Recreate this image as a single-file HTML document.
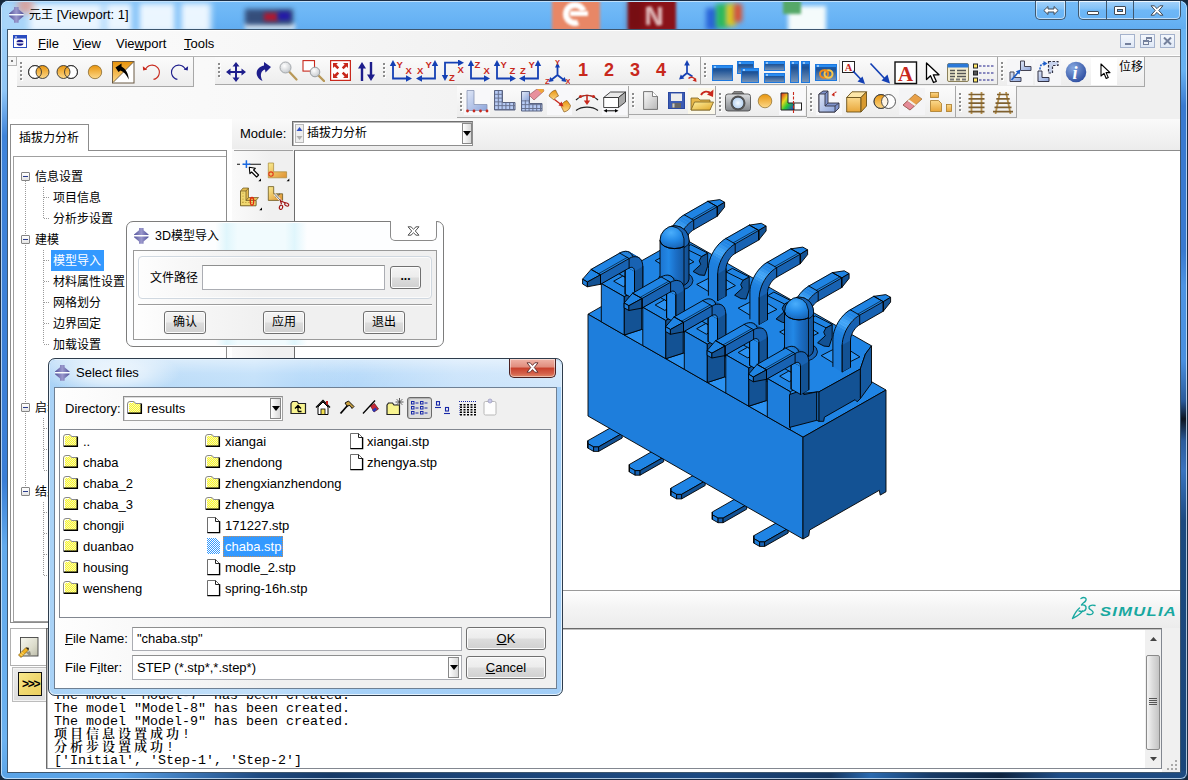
<!DOCTYPE html>
<html lang="zh"><head><meta charset="utf-8"><title>元王 [Viewport: 1]</title>
<style>
html,body{margin:0;padding:0}
body{width:1188px;height:780px;position:relative;overflow:hidden;background:#16283c;font-family:"Liberation Sans","Noto Sans CJK SC",sans-serif;font-size:13px;color:#000;line-height:1}
div,span,svg{position:absolute;box-sizing:border-box}
.t{white-space:nowrap}
u{text-decoration:underline;text-underline-offset:1px}
.cj{font-size:12px}
.tb{background:linear-gradient(#fbfbfb,#ededed);border-bottom:1px solid #a8a8a8;border-right:1px solid #a8a8a8}
.grip{width:3px;border-left:2px dotted #9a9a9a}
.btn{border:1px solid #707070;border-radius:3px;background:linear-gradient(#f4f4f4 0%,#ececec 48%,#dddddd 52%,#d0d0d0 100%);box-shadow:inset 0 0 0 1px #fcfcfc;text-align:center}
.inp{background:#fff;border:1px solid #abadb3;border-top-color:#8e8f8f}
.fold{width:15px;height:13px}
</style></head><body>
<!-- window frame -->
<div id="frame" style="left:0;top:0;width:1188px;height:780px;border-radius:8px 8px 7px 7px;background:#6cb6f6;border:1px solid #1c2e44;overflow:hidden">
<div style="left:0;top:0;width:8px;height:780px;background:linear-gradient(#a6d4fa 0,#90c6f6 90px,#3f84da 135px,#3a7ed6 480px,#62aaec 545px,#6cb2f0 740px,#5aa4e8 780px)"></div>
<div style="left:1178px;top:0;width:9px;height:780px;background:linear-gradient(#6ab4f4 0,#68b2f2 70px,#3a7ad0 105px,#3a7ad0 250px,#4c94e4 285px,#4a90e0 360px,#2a5a9a 400px,#0c1420 418px,#2c5c9c 440px,#3a74c0 470px,#1c4a80 520px,#1b467a 780px)"></div>
<div style="left:0;top:770px;width:1188px;height:9px;background:linear-gradient(90deg,#5aa4e8 0,#5aa2e6 120px,#3a74b4 190px,#1f4a80 260px,#163a68 330px,#1b4274 420px,#1d4a82 700px,#153660 830px,#2a6ab0 870px,#173a66 930px,#0e2440 1000px,#1f4e88 1060px,#1d4a80 1188px)"></div>
<div style="left:0;top:0;width:1186px;height:778px;border-radius:7px 7px 6px 6px;box-shadow:inset 0 0 0 1px rgba(220,238,252,.75)"></div>
</div>
<!-- title bar -->
<div style="left:2px;top:2px;width:1184px;height:27px;border-radius:6px 6px 0 0;background:linear-gradient(#74bbf7,#69b4f5 60%,#62adf0);overflow:hidden">
  <div style="left:-4px;top:-2px;width:34px;height:34px;background:#a9d5f9;filter:blur(3px)"></div>
  <div style="left:27px;top:1px;width:182px;height:30px;background:#f6fbff;filter:blur(3px);opacity:.93"></div>
  <div style="left:16px;top:-4px;width:15px;height:15px;background:#de9a90;filter:blur(3.500px);opacity:.85"></div>
  <div style="left:98px;top:-2px;width:8px;height:32px;background:#9fd0fa;filter:blur(2.500px);opacity:.55"></div>
  <div style="left:129px;top:-2px;width:9px;height:32px;background:#7fc0f8;filter:blur(2.500px);opacity:.85"></div>
  <div style="left:172px;top:-2px;width:8px;height:32px;background:#7fc0f8;filter:blur(2.500px);opacity:.85"></div>
  <div style="left:243px;top:21px;width:50px;height:7px;background:#eef6fd;filter:blur(2px);opacity:.9"></div>
  <div style="left:243px;top:7px;width:48px;height:16px;background:#2c3d66;filter:blur(2.500px);opacity:.85"></div>
  <div style="left:262px;top:11px;width:14px;height:8px;background:#b01830;filter:blur(2px)"></div>
  <div style="left:276px;top:10px;width:12px;height:8px;background:#2418a8;filter:blur(2px)"></div>
  <div style="left:550px;top:-3px;width:48px;height:32px;background:#e88766;filter:blur(1.5px)"></div>
  <div style="left:561px;top:0px;width:24px;height:24px;border:6px solid #fff;border-radius:50%;filter:blur(1.3px);border-right-color:transparent;transform:rotate(25deg)"></div>
  <div style="left:568px;top:9px;width:18px;height:5px;background:#fff;filter:blur(1px)"></div>
  <div style="left:626px;top:-3px;width:48px;height:32px;background:#8a1218;filter:blur(1.5px)"></div>
  <div style="left:644px;top:5px;width:4px;height:18px;background:#ecd0d0;filter:blur(1.5px);opacity:.9"></div><div style="left:656px;top:5px;width:4px;height:18px;background:#ecd0d0;filter:blur(1.5px);opacity:.9"></div><div style="left:650px;top:4px;width:4px;height:20px;background:#ecd0d0;filter:blur(1.5px);opacity:.9;transform:rotate(-28deg)"></div><div style="left:626px;top:-3px;width:14px;height:32px;background:#6a0c10;filter:blur(3px);opacity:.6"></div>
  <div style="left:704px;top:6px;width:12px;height:22px;background:#2a64d8;filter:blur(2.5px)"></div>
  <div style="left:714px;top:2px;width:12px;height:24px;background:#28b860;filter:blur(2.5px)"></div>
  <div style="left:724px;top:2px;width:10px;height:22px;background:#d8c820;filter:blur(2.5px)"></div>
  <div style="left:732px;top:2px;width:8px;height:18px;background:#d85030;filter:blur(2.5px)"></div>
  <div style="left:786px;top:4px;width:38px;height:26px;background:#f4fbfb;filter:blur(2px)"></div>
  <div style="left:781px;top:-3px;width:18px;height:15px;background:#55a868;filter:blur(1.5px)"></div>
</div>
<div style="left:8px;top:29px;width:1172px;height:1px;background:#33506c"></div>
<svg style="left:8.5px;top:7px" width="15" height="16" viewBox="0 0 15 16"><defs><linearGradient id="tg" x1="0" x2="1"><stop offset="0" stop-color="#54549c"/><stop offset=".5" stop-color="#9a98cc"/><stop offset="1" stop-color="#54549c"/></linearGradient></defs><path d="M5 0h4.600v2.200l5 4.300v.6H0v-.6l5-4.300z" fill="url(#tg)"/><rect x="0" y="7.100" width="14.600" height="1.500" fill="#fff"/><path d="M5 15.700h4.600v-2.200l5-4.300v-.6H0v.6l5 4.300z" fill="url(#tg)"/></svg>
<span class="t" style="left:29px;top:8px;font-size:13px"><span style="position:static;font-size:12px">元王</span> [Viewport: 1]</span>
<!-- caption buttons -->
<div style="left:1035px;top:1px;width:31px;height:19px;border:1px solid #40586e;border-top:none;border-radius:0 0 5px 5px;box-shadow:inset 0 0 0 1px rgba(255,255,255,.55);background:linear-gradient(rgba(255,255,255,.35),rgba(255,255,255,.12) 45%,rgba(255,255,255,0) 50%)"></div>
<svg style="left:1043px;top:5px" width="16" height="11" viewBox="0 0 16 11"><path d="M0.800 5.500 5 1.500v2.500h6V1.500l4.200 4-4.200 4V7H5v2.500z" fill="#fff" stroke="#404a56" stroke-width="1"/></svg>
<div style="left:1078px;top:1px;width:103px;height:19px;border:1px solid #40586e;border-top:none;border-radius:0 0 5px 5px;box-shadow:inset 0 0 0 1px rgba(255,255,255,.55);background:linear-gradient(rgba(255,255,255,.35),rgba(255,255,255,.12) 45%,rgba(255,255,255,0) 50%)"></div>
<div style="left:1106px;top:1px;width:1px;height:18px;background:#40586e"></div>
<div style="left:1133px;top:1px;width:1px;height:18px;background:#40586e"></div>
<div style="left:1087px;top:11px;width:12px;height:4px;background:#fff;border:1px solid #404a56;border-radius:1px"></div>
<div style="left:1114px;top:6px;width:12px;height:9px;background:#fff;border:1px solid #404a56;border-radius:1px"></div>
<div style="left:1117px;top:9px;width:6px;height:3px;background:#68aef0;border:1px solid #404a56"></div>
<svg style="left:1150px;top:5px" width="14" height="11" viewBox="0 0 14 11"><path d="M1 .8h3.200L7 3.600 9.800.8H13L8.800 5.500 13 10.200H9.800L7 7.400 4.200 10.200H1l4.200-4.700z" fill="#fff" stroke="#404a56" stroke-width="1"/></svg>

<!-- client -->
<div id="client" style="left:8px;top:30px;width:1172px;height:742px;background:#fff;outline:1px solid #3d566e"></div>
<!-- menu bar -->
<div style="left:8px;top:30px;width:1172px;height:26px;background:linear-gradient(90deg,#fcfcfc 0,#f7f7f7 22%,#f0f0f0 45%);border-top:1px solid #fff;border-bottom:1px solid #fff"></div>
<svg style="left:13px;top:35px" width="14" height="13" viewBox="0 0 14 13"><rect x=".5" y=".5" width="13" height="12" fill="#fff" stroke="#2a4cc0"/><rect x="1" y="1" width="12" height="2.500" fill="#2a4cc0"/><rect x="2" y="1.500" width="2" height="1" fill="#fff"/><ellipse cx="7" cy="7.800" rx="3.600" ry="3" fill="#1c1c8c"/><rect x="3" y="7.200" width="8" height="1.300" fill="#fff"/></svg>
<span class="t" style="left:38px;top:37px"><u>F</u>ile</span>
<span class="t" style="left:73px;top:37px"><u>V</u>iew</span>
<span class="t" style="left:116px;top:37px">Vie<u>w</u>port</span>
<span class="t" style="left:184px;top:37px"><u>T</u>ools</span>
<!-- MDI buttons -->
<div style="left:1120px;top:34px;width:15px;height:14px;border:1px solid #a4b2cc;background:linear-gradient(#f4f7fc,#dfe8f6)"></div>
<div style="left:1125px;top:43px;width:6px;height:2px;background:#74809c"></div>
<div style="left:1140px;top:34px;width:15px;height:14px;border:1px solid #a4b2cc;background:linear-gradient(#f4f7fc,#dfe8f6)"></div>
<div style="left:1146px;top:37px;width:6px;height:5px;border:1px solid #74809c;border-top-width:2px"></div>
<div style="left:1143px;top:40px;width:6px;height:5px;border:1px solid #74809c;border-top-width:2px;background:#eef1f6"></div>
<div style="left:1160px;top:34px;width:15px;height:14px;border:1px solid #a4b2cc;background:linear-gradient(#f4f7fc,#dfe8f6)"></div>
<svg style="left:1163px;top:37px" width="9" height="8" viewBox="0 0 9 8"><path d="M1 .5 8 7.500M8 .5 1 7.500" stroke="#74809c" stroke-width="2"/></svg>

<svg width="0" height="0" style="left:0;top:0"><defs>
<linearGradient id="og" x1="0" y1="0" x2="0" y2="1"><stop offset="0" stop-color="#e8940c"/><stop offset="1" stop-color="#fdd98a"/></linearGradient>
<linearGradient id="og2" x1="0" y1="0" x2="0" y2="1"><stop offset="0" stop-color="#fbd98c"/><stop offset="1" stop-color="#e8a63a"/></linearGradient>
<linearGradient id="bw" x1="0" y1="0" x2="0" y2="1"><stop offset="0" stop-color="#1c66c0"/><stop offset=".3" stop-color="#1d5296"/><stop offset="1" stop-color="#7a96b8"/></linearGradient>
<linearGradient id="lb" x1="0" y1="0" x2="1" y2="1"><stop offset="0" stop-color="#dfe6f6"/><stop offset="1" stop-color="#8ea6dc"/></linearGradient>
<linearGradient id="gy" x1="0" y1="0" x2="1" y2="1"><stop offset="0" stop-color="#fbfbfb"/><stop offset="1" stop-color="#b8b8b8"/></linearGradient>
<radialGradient id="lens" cx=".4" cy=".35" r=".7"><stop offset="0" stop-color="#ffffff"/><stop offset="1" stop-color="#c4c8cc"/></radialGradient>
<linearGradient id="ye" x1="0" y1="0" x2="1" y2="1"><stop offset="0" stop-color="#fff0a0"/><stop offset="1" stop-color="#e0a828"/></linearGradient>
</defs></svg>
<div style="left:8px;top:56px;width:1172px;height:1px;background:#b4b4b4"></div>
<div style="left:8px;top:57px;width:1172px;height:62px;background:linear-gradient(90deg,#fcfcfc 0,#f8f8f8 22%,#f0f0f0 48%)"></div>
<div style="left:8px;top:57px;width:9px;height:9px;border-right:1px solid #b4b4b4;border-bottom:1px solid #b4b4b4;background:#f6f6f6"></div><div style="left:11px;top:60px;width:2px;height:2px;background:#7c7c7c"></div>
<div class="tb" style="left:17px;top:57px;width:177px;height:30px;"></div>
<div style="left:21px;top:63px;width:2px;height:2px;background:#fff"></div><div style="left:20px;top:62px;width:2px;height:2px;background:#8c8c8c"></div>
<div style="left:21px;top:67px;width:2px;height:2px;background:#fff"></div><div style="left:20px;top:66px;width:2px;height:2px;background:#8c8c8c"></div>
<div style="left:21px;top:71px;width:2px;height:2px;background:#fff"></div><div style="left:20px;top:70px;width:2px;height:2px;background:#8c8c8c"></div>
<div style="left:21px;top:75px;width:2px;height:2px;background:#fff"></div><div style="left:20px;top:74px;width:2px;height:2px;background:#8c8c8c"></div>
<div style="left:21px;top:79px;width:2px;height:2px;background:#fff"></div><div style="left:20px;top:78px;width:2px;height:2px;background:#8c8c8c"></div>
<svg style="left:27px;top:64px" width="24" height="16" viewBox="0 0 24 16"><circle cx="8" cy="8" r="6.500" fill="#fff" stroke="#333" stroke-width=".9"/><circle cx="15.500" cy="8" r="6.500" fill="url(#og)" stroke="#333" stroke-width=".9"/><circle cx="8" cy="8" r="6.500" fill="none" stroke="#333" stroke-width=".9"/></svg>
<svg style="left:55px;top:64px" width="24" height="16" viewBox="0 0 24 16"><circle cx="16" cy="8" r="6.500" fill="#fff" stroke="#333" stroke-width=".9"/><circle cx="8.500" cy="8" r="6.500" fill="url(#og)" stroke="#333" stroke-width=".9"/><circle cx="16" cy="8" r="6.500" fill="none" stroke="#333" stroke-width=".9"/></svg>
<svg style="left:87px;top:64px" width="16" height="16" viewBox="0 0 16 16"><circle cx="8" cy="8" r="6.700" fill="url(#og)" stroke="#7a5a20" stroke-width=".7"/></svg>
<svg style="left:112px;top:61px" width="23" height="23" viewBox="0 0 23 23"><rect x=".5" y=".5" width="21.500" height="21.500" fill="#fff" stroke="#6a5a44"/><path d="M1 1H21.500L1 21.500z" fill="url(#og)"/><path d="M1 21.500 21.500 1" stroke="#5a4a34" stroke-width=".8"/><path d="M3.500 6.500 9.500 2.500 9.500 5.500C13.500 7.500 16.500 12.500 16.800 18.500 14.500 13.500 11.500 10.500 8.500 9.500L6.500 11z" fill="#000"/></svg>
<svg style="left:142px;top:63px" width="19" height="19" viewBox="0 0 19 19"><path d="M3.400 6.800A7.200 7.200 0 1 1 11.500 16.400" fill="none" stroke="#c8281c" stroke-width="1.100"/><path d="M.8 3.300 5.200 6.600 1.200 7.500z" fill="#c8281c"/></svg>
<svg style="left:170px;top:63px" width="19" height="19" viewBox="0 0 19 19"><path d="M15.500 6.800A7.200 7.200 0 1 0 7.400 16.400" fill="none" stroke="#1e1e8c" stroke-width="1.100"/><path d="M18.100 3.300 13.700 6.600 17.700 7.500z" fill="#1e1e8c"/></svg>
<div class="tb" style="left:215px;top:57px;width:166px;height:28px;"></div>
<div style="left:219px;top:64px;width:2px;height:2px;background:#fff"></div><div style="left:218px;top:63px;width:2px;height:2px;background:#8c8c8c"></div>
<div style="left:219px;top:68px;width:2px;height:2px;background:#fff"></div><div style="left:218px;top:67px;width:2px;height:2px;background:#8c8c8c"></div>
<div style="left:219px;top:72px;width:2px;height:2px;background:#fff"></div><div style="left:218px;top:71px;width:2px;height:2px;background:#8c8c8c"></div>
<div style="left:219px;top:76px;width:2px;height:2px;background:#fff"></div><div style="left:218px;top:75px;width:2px;height:2px;background:#8c8c8c"></div>
<svg style="left:226px;top:62px" width="20" height="20" viewBox="0 0 20 20"><path d="M10 0 13.500 4.500H11V9H15.500V6.500L20 10 15.500 13.500V11H11V15.500H13.500L10 20 6.500 15.500H9V11H4.500V13.500L0 10 4.500 6.500V9H9V4.500H6.500z" fill="#1e1e8c"/></svg>
<svg style="left:254px;top:62px" width="17" height="20" viewBox="0 0 17 20"><path d="M10 0 17 5 11.500 10.500 11 7.500C7 8.500 5.500 13 8.500 19 1 15.500 0 6 10 3.500z" fill="#1e1e8c"/></svg>
<svg style="left:279px;top:61px" width="19" height="20" viewBox="0 0 19 20"><path d="M10 10.500 17.500 18.500" stroke="#b89858" stroke-width="2.200" stroke-linecap="round"/><circle cx="6.500" cy="6.500" r="5.500" fill="url(#lens)" stroke="#a4a8ac" stroke-width="1"/></svg>
<svg style="left:302px;top:60px" width="23" height="22" viewBox="0 0 23 22"><rect x="1" y=".6" width="11.500" height="10.500" fill="#fff" stroke="#c8281c" stroke-width="1.100"/><path d="M16 15 22 21" stroke="#b89858" stroke-width="2.400" stroke-linecap="round"/><circle cx="13" cy="12" r="4.800" fill="url(#lens)" stroke="#9a9ea2" stroke-width="1"/></svg>
<svg style="left:330px;top:60px" width="21" height="21" viewBox="0 0 21 21"><rect x=".6" y=".6" width="19.800" height="19.800" fill="#fff" stroke="#c8281c" stroke-width="1.200"/><g fill="#c8281c"><path d="M3 3H8L6.400 4.600 9.200 7.400 7.400 9.200 4.600 6.400 3 8z"/><path d="M18 3V8L16.400 6.400 13.600 9.200 11.800 7.400 14.600 4.600 13 3z"/><path d="M3 18V13L4.600 14.600 7.400 11.800 9.200 13.600 6.400 16.400 8 18z"/><path d="M18 18H13L14.600 16.400 11.800 13.600 13.600 11.800 16.400 14.600 18 13z"/></g></svg>
<svg style="left:358px;top:62px" width="17" height="19" viewBox="0 0 17 19"><path d="M4 0 8 6.500H5.200V19H2.800V6.500H0z" fill="#1e1e8c"/><path d="M13 19 9 12.500H11.800V0H14.200V12.500H17z" fill="#1e1e8c"/></svg>
<div class="tb" style="left:380px;top:57px;width:321px;height:28px;"></div>
<div style="left:384px;top:64px;width:2px;height:2px;background:#fff"></div><div style="left:383px;top:63px;width:2px;height:2px;background:#8c8c8c"></div>
<div style="left:384px;top:68px;width:2px;height:2px;background:#fff"></div><div style="left:383px;top:67px;width:2px;height:2px;background:#8c8c8c"></div>
<div style="left:384px;top:72px;width:2px;height:2px;background:#fff"></div><div style="left:383px;top:71px;width:2px;height:2px;background:#8c8c8c"></div>
<div style="left:384px;top:76px;width:2px;height:2px;background:#fff"></div><div style="left:383px;top:75px;width:2px;height:2px;background:#8c8c8c"></div>
<svg style="left:389px;top:60px" width="24" height="22" viewBox="0 0 24 22"><path d="M4 4V18.500H19" stroke="#1440b4" stroke-width="1.800" fill="none"/><path d="M4 0 7.200 6H.8z" fill="#1440b4"/><path d="M23 18.500 17 21.700V15.300z" fill="#1440b4"/><text x="7.500" y="7.500" font-family="Liberation Sans,sans-serif" font-weight="bold" font-size="9.500" fill="#c8281c">Y</text><text x="16.500" y="14" font-family="Liberation Sans,sans-serif" font-weight="bold" font-size="9.500" fill="#c8281c">X</text></svg>
<svg style="left:416px;top:60px" width="24" height="22" viewBox="0 0 24 22"><path d="M19 4V18.500H4" stroke="#1440b4" stroke-width="1.800" fill="none"/><path d="M19 0 22.200 6H15.800z" fill="#1440b4"/><path d="M0 18.500 6 21.700V15.300z" fill="#1440b4"/><text x="9.500" y="7.500" font-family="Liberation Sans,sans-serif" font-weight="bold" font-size="9.500" fill="#c8281c">Y</text><text x="1" y="14" font-family="Liberation Sans,sans-serif" font-weight="bold" font-size="9.500" fill="#c8281c">X</text></svg>
<svg style="left:441px;top:60px" width="24" height="22" viewBox="0 0 24 22"><path d="M19 2.700H4V17" stroke="#1440b4" stroke-width="1.800" fill="none"/><path d="M23 2.700 17 5.900V-.5z" fill="#1440b4"/><path d="M4 21 7.200 15H.8z" fill="#1440b4"/><text x="16.500" y="13" font-family="Liberation Sans,sans-serif" font-weight="bold" font-size="9.500" fill="#c8281c">X</text><text x="8" y="21" font-family="Liberation Sans,sans-serif" font-weight="bold" font-size="9.500" fill="#c8281c">Z</text></svg>
<svg style="left:467px;top:60px" width="24" height="22" viewBox="0 0 24 22"><path d="M4 4V18.500H19" stroke="#1440b4" stroke-width="1.800" fill="none"/><path d="M4 0 7.200 6H.8z" fill="#1440b4"/><path d="M23 18.500 17 21.700V15.300z" fill="#1440b4"/><text x="7.500" y="7.500" font-family="Liberation Sans,sans-serif" font-weight="bold" font-size="9.500" fill="#c8281c">Z</text><text x="16.500" y="14" font-family="Liberation Sans,sans-serif" font-weight="bold" font-size="9.500" fill="#c8281c">X</text></svg>
<svg style="left:493px;top:60px" width="24" height="22" viewBox="0 0 24 22"><path d="M4 4V18.500H19" stroke="#1440b4" stroke-width="1.800" fill="none"/><path d="M4 0 7.200 6H.8z" fill="#1440b4"/><path d="M23 18.500 17 21.700V15.300z" fill="#1440b4"/><text x="7.500" y="7.500" font-family="Liberation Sans,sans-serif" font-weight="bold" font-size="9.500" fill="#c8281c">Y</text><text x="16.500" y="14" font-family="Liberation Sans,sans-serif" font-weight="bold" font-size="9.500" fill="#c8281c">Z</text></svg>
<svg style="left:519px;top:60px" width="24" height="22" viewBox="0 0 24 22"><path d="M19 4V18.500H4" stroke="#1440b4" stroke-width="1.800" fill="none"/><path d="M19 0 22.200 6H15.800z" fill="#1440b4"/><path d="M0 18.500 6 21.700V15.300z" fill="#1440b4"/><text x="9.500" y="7.500" font-family="Liberation Sans,sans-serif" font-weight="bold" font-size="9.500" fill="#c8281c">Y</text><text x="1" y="14" font-family="Liberation Sans,sans-serif" font-weight="bold" font-size="9.500" fill="#c8281c">Z</text></svg>
<svg style="left:545px;top:58px" width="25" height="26" viewBox="0 0 25 26"><path d="M12.500 7V17M12.500 17 5.500 22.500M12.500 17 19.500 22.500" stroke="#1440b4" stroke-width="1.800" fill="none"/><path d="M12.500 4.500 15 9.500H10z" fill="#1440b4"/><path d="M3.500 24 5.300 19 8.800 23z" fill="#1440b4"/><path d="M21.500 24 19.700 19 16.200 23z" fill="#1440b4"/><text x="10" y="6.500" font-family="Liberation Sans,sans-serif" font-weight="bold" font-size="7.500" fill="#c8281c">Y</text><text x="0" y="25.500" font-family="Liberation Sans,sans-serif" font-weight="bold" font-size="7.500" fill="#c8281c">Z</text><text x="20.500" y="25.500" font-family="Liberation Sans,sans-serif" font-weight="bold" font-size="7.500" fill="#c8281c">X</text></svg>
<span class="t" style="left:575px;top:61px;width:16px;text-align:center;font-weight:bold;font-size:18px;color:#c8281c">1</span>
<span class="t" style="left:601px;top:61px;width:16px;text-align:center;font-weight:bold;font-size:18px;color:#c8281c">2</span>
<span class="t" style="left:627px;top:61px;width:16px;text-align:center;font-weight:bold;font-size:18px;color:#c8281c">3</span>
<span class="t" style="left:653px;top:61px;width:16px;text-align:center;font-weight:bold;font-size:18px;color:#c8281c">4</span>
<svg style="left:679px;top:60px" width="18" height="22" viewBox="0 0 18 22"><path d="M8 5V13M8 13 2.500 17.500M8 13 13.500 16.500" stroke="#1440b4" stroke-width="1.700" fill="none"/><path d="M8 0 10.800 5.500H5.200z" fill="#1440b4"/><path d="M0 19.500 1.800 14.500 5.300 18.500z" fill="#1440b4"/><path d="M9.500 18.500C12 16.500 15 17 16.500 20" stroke="#c8281c" stroke-width="1.500" fill="none"/><path d="M17.500 22 13.500 20.500 17 18z" fill="#c8281c"/></svg>
<div class="tb" style="left:701px;top:57px;width:297px;height:28px;"></div>
<div style="left:705px;top:64px;width:2px;height:2px;background:#fff"></div><div style="left:704px;top:63px;width:2px;height:2px;background:#8c8c8c"></div>
<div style="left:705px;top:68px;width:2px;height:2px;background:#fff"></div><div style="left:704px;top:67px;width:2px;height:2px;background:#8c8c8c"></div>
<div style="left:705px;top:72px;width:2px;height:2px;background:#fff"></div><div style="left:704px;top:71px;width:2px;height:2px;background:#8c8c8c"></div>
<div style="left:705px;top:76px;width:2px;height:2px;background:#fff"></div><div style="left:704px;top:75px;width:2px;height:2px;background:#8c8c8c"></div>
<svg style="left:712px;top:61px" width="100" height="24" viewBox="0 0 100 24"><rect x="0.5" y="4.5" width="20" height="15" fill="url(#bw)" stroke="#1c78e0" stroke-width="1"/><rect x="1" y="5" width="19" height="2" fill="#2a8cf0"/><rect x="2" y="5.5" width="2" height="1" fill="#fff"/><rect x="25.5" y="0.5" width="16" height="12" fill="url(#bw)" stroke="#1c78e0" stroke-width="1"/><rect x="26" y="1" width="15" height="2" fill="#2a8cf0"/><rect x="27" y="1.5" width="2" height="1" fill="#fff"/><rect x="29.5" y="7.5" width="17" height="14" fill="url(#bw)" stroke="#1c78e0" stroke-width="1"/><rect x="30" y="8" width="16" height="2" fill="#2a8cf0"/><rect x="31" y="8.5" width="2" height="1" fill="#fff"/><rect x="52.5" y="0.5" width="20" height="9" fill="url(#bw)" stroke="#1c78e0" stroke-width="1"/><rect x="53" y="1" width="19" height="2" fill="#2a8cf0"/><rect x="54" y="1.5" width="2" height="1" fill="#fff"/><rect x="52.5" y="12.5" width="20" height="9" fill="url(#bw)" stroke="#1c78e0" stroke-width="1"/><rect x="53" y="13" width="19" height="2" fill="#2a8cf0"/><rect x="54" y="13.5" width="2" height="1" fill="#fff"/><rect x="78.5" y="0.5" width="8" height="21" fill="url(#bw)" stroke="#1c78e0" stroke-width="1"/><rect x="79" y="1" width="7" height="2" fill="#2a8cf0"/><rect x="80" y="1.5" width="2" height="1" fill="#fff"/><rect x="89.5" y="0.5" width="8" height="21" fill="url(#bw)" stroke="#1c78e0" stroke-width="1"/><rect x="90" y="1" width="7" height="2" fill="#2a8cf0"/><rect x="91" y="1.5" width="2" height="1" fill="#fff"/></svg>
<svg style="left:815px;top:64px" width="23" height="18" viewBox="0 0 23 18"><rect x="0.5" y="0.5" width="21" height="16" fill="url(#bw)" stroke="#1c78e0" stroke-width="1"/><rect x="1" y="1" width="20" height="2" fill="#2a8cf0"/><rect x="2" y="1.5" width="2" height="1" fill="#fff"/><ellipse cx="9" cy="10" rx="4" ry="3.800" fill="none" stroke="#f08a18" stroke-width="2"/><ellipse cx="13.500" cy="10" rx="4" ry="3.800" fill="none" stroke="#f8c84a" stroke-width="2"/><path d="M9 6.200A4 3.800 0 0 1 13 10" fill="none" stroke="#f08a18" stroke-width="2"/></svg>
<div style="left:839px;top:60px;width:1px;height:22px;background:#c4c4c4"></div>
<svg style="left:842px;top:61px" width="24" height="24" viewBox="0 0 24 24"><rect x=".5" y=".5" width="12" height="11" fill="#fff" stroke="#222"/><text x="2.800" y="10" font-family="Liberation Serif,serif" font-weight="bold" font-size="10.500" fill="#c8281c">A</text><path d="M11 10 20 19.500" stroke="#1440b4" stroke-width="1.700"/><path d="M23 23 15.500 20.500 20.500 15.500z" fill="#1440b4"/></svg>
<svg style="left:869px;top:62px" width="22" height="22" viewBox="0 0 22 22"><path d="M1.500 1.500 16 17" stroke="#1440b4" stroke-width="1.700"/><path d="M21 21.500 12.500 18.500 18.500 12.500z" fill="#1440b4"/></svg>
<svg style="left:894px;top:61px" width="24" height="24" viewBox="0 0 24 24"><rect x="1" y="1" width="21.500" height="21.500" fill="#fff" stroke="#111" stroke-width="1.400"/><text x="4" y="19.500" font-family="Liberation Serif,serif" font-weight="bold" font-size="21" fill="#c8281c">A</text></svg>
<svg style="left:925px;top:62px" width="16" height="22" viewBox="0 0 16 22"><path d="M1.500 1V17.500L5.500 13.800 8.500 20.500 11.300 19.300 8.300 12.800H14z" fill="#fff" stroke="#000" stroke-width="1.300" stroke-linejoin="round"/></svg>
<svg style="left:947px;top:63px" width="23" height="20" viewBox="0 0 23 20"><rect x=".5" y=".5" width="21" height="18" rx="1.500" fill="#f2ecd0" stroke="#8a805a"/><path d="M.5 4.500V2A1.500 1.500 0 0 1 2 .5H20A1.500 1.500 0 0 1 21.500 2V4.500z" fill="#2a78d8"/><g stroke="#555" stroke-width="1.300"><path d="M3 7.500H8M10 7.500H19M3 10.500H8M10 10.500H19M3 13.500H8M10 13.500H19"/></g><rect x="3" y="15.500" width="4" height="2" fill="#777"/><rect x="9" y="15.500" width="4" height="2" fill="#777"/><rect x="15" y="15.500" width="4" height="2" fill="#777"/></svg>
<svg style="left:973px;top:63px" width="22" height="20" viewBox="0 0 22 20"><g stroke="#1e1e8c" stroke-width="1.200" stroke-dasharray="2.500 1.500"><path d="M6 3H22M6 10H22M6 17H22"/></g><rect x=".5" y="1" width="4" height="4" fill="#ffe86a" stroke="#222"/><rect x=".5" y="8" width="4" height="4" fill="#555" stroke="#222"/><rect x=".5" y="15" width="4" height="4" fill="#ffe86a" stroke="#222"/></svg>
<div class="tb" style="left:998px;top:57px;width:147px;height:30px;"></div>
<div style="left:1002px;top:63px;width:2px;height:2px;background:#fff"></div><div style="left:1001px;top:62px;width:2px;height:2px;background:#8c8c8c"></div>
<div style="left:1002px;top:67px;width:2px;height:2px;background:#fff"></div><div style="left:1001px;top:66px;width:2px;height:2px;background:#8c8c8c"></div>
<div style="left:1002px;top:71px;width:2px;height:2px;background:#fff"></div><div style="left:1001px;top:70px;width:2px;height:2px;background:#8c8c8c"></div>
<div style="left:1002px;top:75px;width:2px;height:2px;background:#fff"></div><div style="left:1001px;top:74px;width:2px;height:2px;background:#8c8c8c"></div>
<div style="left:1002px;top:79px;width:2px;height:2px;background:#fff"></div><div style="left:1001px;top:78px;width:2px;height:2px;background:#8c8c8c"></div>
<div style="left:1007px;top:59px;width:26px;height:26px;background:#f6f6f8"></div>
<svg style="left:1009px;top:60px" width="23" height="23" viewBox="0 0 23 23"><path d="M11.500 1H15.500V6.500H22V10.500H11.500z" fill="url(#lb)" stroke="#445" stroke-width="1"/><path d="M1 12H5V17.500H12V21.500H1z" fill="url(#lb)" stroke="#445" stroke-width="1"/><path d="M2.500 20 9.500 12" stroke="#1c5cc8" stroke-width="1.600"/><path d="M11.500 9.500 10.500 14.500 6.800 11.300z" fill="#1c5cc8"/></svg>
<div style="left:1035px;top:59px;width:26px;height:26px;background:#f6f6f8"></div>
<svg style="left:1037px;top:60px" width="23" height="23" viewBox="0 0 23 23"><path d="M11.500 1.500H21V5.500H15.500V13H11.500z" fill="#c9d4ee" stroke="#334" stroke-width="1.200" stroke-dasharray="2.500 1.500"/><path d="M1 11H5V17.500H12V21.500H1z" fill="url(#lb)" stroke="#334" stroke-width="1"/><path d="M3 9.500C3 5 5 3.500 8 3.500" stroke="#1c5cc8" stroke-width="1.500" fill="none" stroke-dasharray="2 1.200"/><path d="M10.500 3.500 6.500 1V6z" fill="#1c5cc8"/></svg>
<svg style="left:1065px;top:61px" width="22" height="22" viewBox="0 0 22 22"><defs><radialGradient id="inf" cx=".35" cy=".3" r=".8"><stop offset="0" stop-color="#86a8e0"/><stop offset="1" stop-color="#28489c"/></radialGradient></defs><circle cx="11" cy="11" r="10.300" fill="url(#inf)"/><text x="7.500" y="17.500" font-family="Liberation Serif,serif" font-style="italic" font-weight="bold" font-size="18" fill="#fff">i</text></svg>
<div style="left:1091px;top:58px;width:26px;height:27px;background:#fff"></div>
<svg style="left:1100px;top:63px" width="12" height="17" viewBox="0 0 12 17"><path d="M1 1V13L4 10.300 6.200 15.500 8.300 14.600 6.100 9.600H10z" fill="#fff" stroke="#000" stroke-width="1.100" stroke-linejoin="round"/></svg>
<span class="t" style="left:1119px;top:61px;font-size:12px">位移</span>
<div class="tb" style="left:457px;top:86px;width:172px;height:32px;border-top:none"></div>
<div style="left:461px;top:94px;width:2px;height:2px;background:#fff"></div><div style="left:460px;top:93px;width:2px;height:2px;background:#8c8c8c"></div>
<div style="left:461px;top:98px;width:2px;height:2px;background:#fff"></div><div style="left:460px;top:97px;width:2px;height:2px;background:#8c8c8c"></div>
<div style="left:461px;top:102px;width:2px;height:2px;background:#fff"></div><div style="left:460px;top:101px;width:2px;height:2px;background:#8c8c8c"></div>
<div style="left:461px;top:106px;width:2px;height:2px;background:#fff"></div><div style="left:460px;top:105px;width:2px;height:2px;background:#8c8c8c"></div>
<div style="left:461px;top:110px;width:2px;height:2px;background:#fff"></div><div style="left:460px;top:109px;width:2px;height:2px;background:#8c8c8c"></div>
<div style="left:464px;top:88px;width:26px;height:27px;background:#f8f8fa"></div>
<svg style="left:465px;top:90px" width="25" height="24" viewBox="0 0 25 24"><path d="M2 .5H9V14.500H22V20.500H2z" fill="url(#lb)" stroke="#8894b4" stroke-width=".8"/><g fill="#c8281c"><circle cx="2.500" cy="21" r="1.400"/><circle cx="9" cy="21" r="1.400"/><circle cx="15.500" cy="21" r="1.400"/><circle cx="22" cy="21" r="1.400"/></g></svg>
<svg style="left:494px;top:90px" width="22" height="21" viewBox="0 0 22 21"><defs><pattern id="gp" width="3.800" height="3.800" patternUnits="userSpaceOnUse"><rect width="3.800" height="3.800" fill="#b8ccf6"/><path d="M0 .5H3.800M.5 0V3.800" stroke="#66708e" stroke-width="1.100"/></pattern></defs><path d="M.5 .5H8.500V12.500H21V20H.5z" fill="url(#gp)" stroke="#5a6482"/></svg>
<svg style="left:521px;top:89px" width="24" height="23" viewBox="0 0 24 23"><path d="M.5 2.500H8.500V14.500H21V22H.5z" fill="url(#gp)" stroke="#5a6482"/><path d="M1 3H8V11H1z" fill="url(#lb)"/><path d="M8 6 16 0H22L23 2 13 11z" fill="#e8909c" stroke="#8a4a50" stroke-width=".6"/><path d="M16 0H22L23 2 20.500 4.200z" fill="#f0a838"/></svg>
<div style="left:547px;top:88px;width:25px;height:27px;background:#f8f8fa"></div>
<svg style="left:548px;top:89px" width="24" height="24" viewBox="0 0 24 24"><path d="M1 7C2 4 4 2 7.500 1L10.500 7C8 8 7 9 6 11z" fill="url(#og)" stroke="#8a5a18" stroke-width=".7"/><path d="M13 17C14.500 14 16 12.500 19 11.500L22.500 16.500C22 20 20 22 16 23z" fill="url(#og)" stroke="#8a5a18" stroke-width=".7"/><path d="M6.500 10.500 13 15.500" stroke="#c8281c" stroke-width="1.400"/><path d="M15.500 17.500 10.500 16.500 13.500 12.500z" fill="#c8281c"/></svg>
<svg style="left:575px;top:92px" width="24" height="20" viewBox="0 0 24 20"><path d="M1 8C7 2 17 2 23 8" fill="none" stroke="#222" stroke-width="1.200"/><path d="M1 18.500C7 14 17 14 23 18.500" fill="none" stroke="#222" stroke-width="1.200"/><path d="M5 4.500 12 3 19 4.500" stroke="#c8281c" stroke-width="1" fill="none"/><circle cx="5.500" cy="4.500" r="1.600" fill="#c8281c"/><circle cx="18.500" cy="4.500" r="1.600" fill="#c8281c"/><path d="M12 3.500V9" stroke="#c8281c" stroke-width="1.600"/><path d="M12 13 8.800 8.500H15.200z" fill="#c8281c"/></svg>
<div style="left:602px;top:88px;width:25px;height:27px;background:#f8f8fa"></div>
<svg style="left:603px;top:91px" width="24" height="22" viewBox="0 0 24 22"><path d="M.7 6.500H15.500V16.500H.7z" fill="#fff" stroke="#333" stroke-width=".9"/><path d="M.7 6.500 7.500 1H22.500L15.500 6.500z" fill="#e8e8e8" stroke="#333" stroke-width=".9"/><path d="M15.500 6.500 22.500 1V11L15.500 16.500z" fill="#aaa" stroke="#333" stroke-width=".9"/><path d="M3 19.800H13" stroke="#000" stroke-width="1"/><path d="M.5 19.800 4 18V21.600zM15.500 19.800 12 18V21.600z" fill="#000"/></svg>
<div class="tb" style="left:629px;top:86px;width:87px;height:29px;border-top:none"></div>
<div style="left:633px;top:94px;width:2px;height:2px;background:#fff"></div><div style="left:632px;top:93px;width:2px;height:2px;background:#8c8c8c"></div>
<div style="left:633px;top:98px;width:2px;height:2px;background:#fff"></div><div style="left:632px;top:97px;width:2px;height:2px;background:#8c8c8c"></div>
<div style="left:633px;top:102px;width:2px;height:2px;background:#fff"></div><div style="left:632px;top:101px;width:2px;height:2px;background:#8c8c8c"></div>
<div style="left:633px;top:106px;width:2px;height:2px;background:#fff"></div><div style="left:632px;top:105px;width:2px;height:2px;background:#8c8c8c"></div>
<svg style="left:643px;top:91px" width="16" height="19" viewBox="0 0 16 19"><path d="M.6 .6H9.500L14.500 5.500V18.400H.6z" fill="url(#gy)" stroke="#666" stroke-width=".9"/><path d="M9.500 .6V5.500H14.500" fill="#fff" stroke="#666" stroke-width=".8"/></svg>
<svg style="left:668px;top:92px" width="17" height="17" viewBox="0 0 17 17"><rect x=".5" y=".5" width="16" height="16" fill="#3c5cb4" stroke="#2a48a0"/><rect x="3" y="1.500" width="11" height="7.500" fill="#ececec"/><rect x="4" y="11" width="9" height="5" fill="#666"/><rect x="4.500" y="11.500" width="2" height="4" fill="#ccc"/></svg>
<div style="left:688px;top:88px;width:27px;height:26px;background:#fbf8ea"></div>
<svg style="left:690px;top:88px" width="25" height="24" viewBox="0 0 25 24"><path d="M1 10H8L10 12H20V22H1z" fill="#e8b84a" stroke="#7a6020" stroke-width=".8"/><path d="M1 22 4.500 14H23.500L20 22z" fill="url(#ye)" stroke="#7a6020" stroke-width=".8"/><path d="M11 7C13 3 18 2.500 21 5.500" fill="none" stroke="#c8281c" stroke-width="1.800"/><path d="M23.500 1.500 23 9 17 6.500z" fill="#c8281c"/></svg>
<div class="tb" style="left:716px;top:86px;width:91px;height:31px;border-top:none"></div>
<div style="left:720px;top:94px;width:2px;height:2px;background:#fff"></div><div style="left:719px;top:93px;width:2px;height:2px;background:#8c8c8c"></div>
<div style="left:720px;top:98px;width:2px;height:2px;background:#fff"></div><div style="left:719px;top:97px;width:2px;height:2px;background:#8c8c8c"></div>
<div style="left:720px;top:102px;width:2px;height:2px;background:#fff"></div><div style="left:719px;top:101px;width:2px;height:2px;background:#8c8c8c"></div>
<div style="left:720px;top:106px;width:2px;height:2px;background:#fff"></div><div style="left:719px;top:105px;width:2px;height:2px;background:#8c8c8c"></div>
<div style="left:720px;top:110px;width:2px;height:2px;background:#fff"></div><div style="left:719px;top:109px;width:2px;height:2px;background:#8c8c8c"></div>
<svg style="left:725px;top:91px" width="26" height="22" viewBox="0 0 26 22"><defs><linearGradient id="cam" x1="0" y1="0" x2="0" y2="1"><stop offset="0" stop-color="#dcdee0"/><stop offset="1" stop-color="#83878c"/></linearGradient><radialGradient id="cl" cx=".5" cy=".5" r=".6"><stop offset="0" stop-color="#f4faff"/><stop offset="1" stop-color="#a8c8ec"/></radialGradient></defs><path d="M7 3 9 .5H17L19 3z" fill="#888" stroke="#444" stroke-width=".6"/><rect x=".5" y="3" width="25" height="17" rx="2.500" fill="url(#cam)" stroke="#444" stroke-width=".8"/><circle cx="13" cy="12" r="7.500" fill="#555"/><circle cx="13" cy="12" r="5.800" fill="url(#cl)" stroke="#333" stroke-width=".6"/></svg>
<svg style="left:757px;top:93px" width="16" height="16" viewBox="0 0 16 16"><circle cx="8" cy="8" r="6.800" fill="url(#og)" stroke="#8a6a28" stroke-width=".7"/></svg>
<div style="left:779px;top:88px;width:26px;height:27px;background:#f8f8fa"></div>
<svg style="left:780px;top:92px" width="23" height="22" viewBox="0 0 23 22"><defs><linearGradient id="rb" x1="0" y1="0" x2="1" y2="1"><stop offset="0" stop-color="#e02020"/><stop offset=".35" stop-color="#e8d820"/><stop offset=".6" stop-color="#28c838"/><stop offset="1" stop-color="#2038d8"/></linearGradient></defs><path d="M1 1H8V11H14V18H1z" fill="url(#rb)" stroke="#222" stroke-width="1"/><rect x="14" y="11" width="7.500" height="7" fill="#fff" stroke="#222" stroke-width="1"/><path d="M13.500 0V22" stroke="#c8281c" stroke-width="1.100" stroke-dasharray="3 1.500"/></svg>
<div class="tb" style="left:807px;top:86px;width:149px;height:32px;border-top:none"></div>
<div style="left:811px;top:94px;width:2px;height:2px;background:#fff"></div><div style="left:810px;top:93px;width:2px;height:2px;background:#8c8c8c"></div>
<div style="left:811px;top:98px;width:2px;height:2px;background:#fff"></div><div style="left:810px;top:97px;width:2px;height:2px;background:#8c8c8c"></div>
<div style="left:811px;top:102px;width:2px;height:2px;background:#fff"></div><div style="left:810px;top:101px;width:2px;height:2px;background:#8c8c8c"></div>
<div style="left:811px;top:106px;width:2px;height:2px;background:#fff"></div><div style="left:810px;top:105px;width:2px;height:2px;background:#8c8c8c"></div>
<div style="left:811px;top:110px;width:2px;height:2px;background:#fff"></div><div style="left:810px;top:109px;width:2px;height:2px;background:#8c8c8c"></div>
<div style="left:816px;top:88px;width:26px;height:27px;background:#f8f8fa"></div>
<svg style="left:818px;top:90px" width="23" height="24" viewBox="0 0 23 24"><path d="M1 4 5 1H10V13H21V18L17 22H1z" fill="#8094cc" stroke="#334" stroke-width=".9"/><path d="M1 4H7V16H17V22H1z" fill="url(#lb)" stroke="#334" stroke-width=".9"/><path d="M7 4 10 1M7 16 10 13M17 16 21 13" stroke="#334" stroke-width=".8"/><path d="M15 5C15.500 3 17 2 18.500 2" stroke="#c8281c" stroke-width="1.200" fill="none" stroke-dasharray="2 1"/><path d="M16.500 6.500 13.500 5 16.500 2.500z" fill="#c8281c"/></svg>
<svg style="left:846px;top:91px" width="22" height="22" viewBox="0 0 22 22"><path d="M.7 6.500H15V21H.7z" fill="url(#og2)" stroke="#6a5018" stroke-width=".9"/><path d="M.7 6.500 6 .8H20.500L15 6.500z" fill="#fde6a8" stroke="#6a5018" stroke-width=".9"/><path d="M15 6.500 20.500 .8V15L15 21z" fill="#d89a30" stroke="#6a5018" stroke-width=".9"/></svg>
<svg style="left:873px;top:93px" width="24" height="17" viewBox="0 0 24 17"><circle cx="8" cy="8.500" r="7" fill="url(#og)" stroke="#444" stroke-width=".9"/><circle cx="15.500" cy="8.500" r="7" fill="#fff" fill-opacity=".85" stroke="#444" stroke-width=".9"/><circle cx="8" cy="8.500" r="7" fill="none" stroke="#444" stroke-width=".9"/></svg>
<div style="left:899px;top:88px;width:26px;height:27px;background:#f4f4f6"></div>
<svg style="left:902px;top:93px" width="21" height="18" viewBox="0 0 21 18"><path d="M1 12 13 1 20 6 8 17z" fill="#e8a048" stroke="#8a5a20" stroke-width=".6"/><path d="M1 12 5.500 8 12.500 13 8 17z" fill="#e48a98" stroke="#8a4a50" stroke-width=".6"/><path d="M5.500 8 7 6.600 14 11.600 12.500 13z" fill="#f4f0ec"/></svg>
<svg style="left:930px;top:92px" width="23" height="21" viewBox="0 0 23 21"><rect x=".5" y=".5" width="8" height="5" fill="url(#og2)" stroke="#a87a28" stroke-width=".8"/><path d="M.5 8.500H8.500L11.500 11.500V19.500H.5z" fill="url(#og2)" stroke="#a87a28" stroke-width=".8"/><rect x="16.500" y="12.500" width="5" height="7" fill="url(#og2)" stroke="#a87a28" stroke-width=".8"/></svg>
<div class="tb" style="left:956px;top:86px;width:61px;height:32px;border-top:none"></div>
<div style="left:960px;top:94px;width:2px;height:2px;background:#fff"></div><div style="left:959px;top:93px;width:2px;height:2px;background:#8c8c8c"></div>
<div style="left:960px;top:98px;width:2px;height:2px;background:#fff"></div><div style="left:959px;top:97px;width:2px;height:2px;background:#8c8c8c"></div>
<div style="left:960px;top:102px;width:2px;height:2px;background:#fff"></div><div style="left:959px;top:101px;width:2px;height:2px;background:#8c8c8c"></div>
<div style="left:960px;top:106px;width:2px;height:2px;background:#fff"></div><div style="left:959px;top:105px;width:2px;height:2px;background:#8c8c8c"></div>
<div style="left:960px;top:110px;width:2px;height:2px;background:#fff"></div><div style="left:959px;top:109px;width:2px;height:2px;background:#8c8c8c"></div>
<svg style="left:968px;top:92px" width="17" height="22" viewBox="0 0 17 22"><g stroke="#b8924c" stroke-width="1.800"><path d="M3.500 0V22M13.500 0V22"/></g><g stroke="#7e6030" stroke-width="1.700"><path d="M.5 2.500H16.500M.5 6.800H16.500M.5 11.100H16.500M.5 15.400H16.500M.5 19.700H16.500"/></g></svg>
<svg style="left:992px;top:92px" width="22" height="22" viewBox="0 0 22 22"><g stroke="#b8924c" stroke-width="1.800"><path d="M8 0 3.500 22M14 0 18.500 22"/></g><g stroke="#7e6030" stroke-width="1.700"><path d="M5 2.500H17M4.300 6.800H17.700M3.500 11.100H18.500M2.500 15.400H19.500M1 19.700H21"/></g></svg>
<!-- left panel -->
<div style="left:10px;top:124px;width:79px;height:27px;border:1px solid #8c8c8c;border-bottom:none;background:#fff"></div>
<span class="t cj" style="left:19px;top:132px">插拔力分析</span>
<div style="left:10px;top:150px;width:217px;height:473px;border:1px solid #8c8c8c;border-top:none;background:#fff"></div>
<div style="left:88px;top:150px;width:139px;height:1px;background:#8c8c8c"></div>
<div style="left:13px;top:156px;width:213px;height:466px;border:1px solid #a0a0a0;border-right:none;background:#fff"></div>
<div id="tree" style="left:14px;top:157px;width:212px;height:464px;overflow:hidden;font-size:12px">
  <!-- dotted connectors -->
  <div style="left:11px;top:24px;width:1px;height:306px;background:repeating-linear-gradient(#9a9a9a 0 1px,transparent 1px 2px)"></div>
  <div style="left:29px;top:30px;width:1px;height:31px;background:repeating-linear-gradient(#9a9a9a 0 1px,transparent 1px 2px)"></div>
  <div style="left:29px;top:93px;width:1px;height:94px;background:repeating-linear-gradient(#9a9a9a 0 1px,transparent 1px 2px)"></div>
  <div style="left:29px;top:261px;width:1px;height:52px;background:repeating-linear-gradient(#9a9a9a 0 1px,transparent 1px 2px)"></div>
  <div style="left:29px;top:345px;width:1px;height:74px;background:repeating-linear-gradient(#9a9a9a 0 1px,transparent 1px 2px)"></div>
</div>
<div style="left:21px;top:172px;width:9px;height:9px;border:1px solid #848484;border-radius:1px;background:linear-gradient(#fff,#e4e4e4)"></div><div style="left:23px;top:176px;width:5px;height:1px;background:#2a3c8c"></div>
<span class="t cj" style="left:35px;top:171px">信息设置</span>
<div style="left:44px;top:197px;width:5px;height:1px;background:repeating-linear-gradient(90deg,#9a9a9a 0 1px,transparent 1px 2px)"></div>
<span class="t cj" style="left:53px;top:192px">项目信息</span>
<div style="left:44px;top:218px;width:5px;height:1px;background:repeating-linear-gradient(90deg,#9a9a9a 0 1px,transparent 1px 2px)"></div>
<span class="t cj" style="left:53px;top:213px">分析步设置</span>
<div style="left:21px;top:235px;width:9px;height:9px;border:1px solid #848484;border-radius:1px;background:linear-gradient(#fff,#e4e4e4)"></div><div style="left:23px;top:239px;width:5px;height:1px;background:#2a3c8c"></div>
<span class="t cj" style="left:35px;top:234px">建模</span>
<div style="left:44px;top:260px;width:5px;height:1px;background:repeating-linear-gradient(90deg,#9a9a9a 0 1px,transparent 1px 2px)"></div>
<div style="left:51px;top:250px;width:53px;height:21px;background:#3399ff"></div><span class="t cj" style="left:53px;top:255px;color:#fff">模型导入</span>
<div style="left:44px;top:281px;width:5px;height:1px;background:repeating-linear-gradient(90deg,#9a9a9a 0 1px,transparent 1px 2px)"></div>
<span class="t cj" style="left:53px;top:276px">材料属性设置</span>
<div style="left:44px;top:302px;width:5px;height:1px;background:repeating-linear-gradient(90deg,#9a9a9a 0 1px,transparent 1px 2px)"></div>
<span class="t cj" style="left:53px;top:297px">网格划分</span>
<div style="left:44px;top:323px;width:5px;height:1px;background:repeating-linear-gradient(90deg,#9a9a9a 0 1px,transparent 1px 2px)"></div>
<span class="t cj" style="left:53px;top:318px">边界固定</span>
<div style="left:44px;top:344px;width:5px;height:1px;background:repeating-linear-gradient(90deg,#9a9a9a 0 1px,transparent 1px 2px)"></div>
<span class="t cj" style="left:53px;top:339px">加载设置</span>
<div style="left:21px;top:403px;width:9px;height:9px;border:1px solid #848484;border-radius:1px;background:linear-gradient(#fff,#e4e4e4)"></div><div style="left:23px;top:407px;width:5px;height:1px;background:#2a3c8c"></div>
<span class="t cj" style="left:35px;top:402px">启动计算</span>
<div style="left:44px;top:428px;width:5px;height:1px;background:repeating-linear-gradient(90deg,#9a9a9a 0 1px,transparent 1px 2px)"></div>
<span class="t cj" style="left:53px;top:423px">提交计算</span>
<div style="left:44px;top:449px;width:5px;height:1px;background:repeating-linear-gradient(90deg,#9a9a9a 0 1px,transparent 1px 2px)"></div>
<span class="t cj" style="left:53px;top:444px">计算监控</span>
<div style="left:44px;top:470px;width:5px;height:1px;background:repeating-linear-gradient(90deg,#9a9a9a 0 1px,transparent 1px 2px)"></div>
<span class="t cj" style="left:53px;top:465px">终止计算</span>
<div style="left:21px;top:487px;width:9px;height:9px;border:1px solid #848484;border-radius:1px;background:linear-gradient(#fff,#e4e4e4)"></div><div style="left:23px;top:491px;width:5px;height:1px;background:#2a3c8c"></div>
<span class="t cj" style="left:35px;top:486px">结果后处理</span>
<div style="left:44px;top:512px;width:5px;height:1px;background:repeating-linear-gradient(90deg,#9a9a9a 0 1px,transparent 1px 2px)"></div>
<span class="t cj" style="left:53px;top:507px">应力云图</span>
<div style="left:44px;top:533px;width:5px;height:1px;background:repeating-linear-gradient(90deg,#9a9a9a 0 1px,transparent 1px 2px)"></div>
<span class="t cj" style="left:53px;top:528px">位移云图</span>
<div style="left:44px;top:554px;width:5px;height:1px;background:repeating-linear-gradient(90deg,#9a9a9a 0 1px,transparent 1px 2px)"></div>
<span class="t cj" style="left:53px;top:549px">插拔力曲线</span>
<div style="left:44px;top:575px;width:5px;height:1px;background:repeating-linear-gradient(90deg,#9a9a9a 0 1px,transparent 1px 2px)"></div>
<span class="t cj" style="left:53px;top:570px">报告输出</span>

<!-- module row + toolbox + viewport -->
<div style="left:232px;top:119px;width:948px;height:31px;background:linear-gradient(#fafafa,#ececec)"></div>
<div style="left:232px;top:149px;width:63px;height:474px;background:linear-gradient(90deg,#fafafa,#f0f0f0 60%)"></div>
<span class="t" style="left:240px;top:127px">Module:</span>
<div style="left:234px;top:150px;width:59px;height:1px;background:#a0a0a0"></div>
<div style="left:292px;top:121px;width:181px;height:25px;background:#fff;border:1px solid #8e8e8e;border-top-color:#707070;border-left-color:#707070;box-shadow:inset 1px 1px 0 #b8b8b8"></div>
<div style="left:295px;top:124px;width:9px;height:19px;background:#eee;border:1px solid #b8b8b8"></div>
<svg style="left:296px;top:126px" width="7" height="15" viewBox="0 0 7 15"><path d="M3.500 1 6.500 5H.5z" fill="#3050c0"/><path d="M3.500 14 6.500 10H.5z" fill="#b0b0b0"/></svg>
<span class="t cj" style="left:307px;top:127px">插拔力分析</span>
<div style="left:462px;top:123px;width:10px;height:21px;background:linear-gradient(90deg,#fff,#d8d8d8);border:1px solid #888"></div>
<svg style="left:463px;top:131px" width="8" height="5" viewBox="0 0 8 5"><path d="M0 0H8L4 5z" fill="#000"/></svg>
<!-- toolbox icons -->
<svg style="left:236px;top:158px" width="27" height="26" viewBox="0 0 27 26"><path d="M1 6.300H4M7.500 6.300H8M13 6.300H25" stroke="#111" stroke-width="1.100"/><path d="M10.400 2.200V10M6.500 6.300H14.300" stroke="#1868e0" stroke-width="1.500"/><path d="M13.300 9.200 19.300 10.300 17.600 12 22.600 17 20.600 19 15.600 14 13.900 15.700z" fill="#fff" stroke="#000" stroke-width="1.100" stroke-linejoin="round"/><path d="M25 23.200H22.300L25 20.500z" fill="#000"/></svg>
<svg style="left:266px;top:160px" width="25" height="23" viewBox="0 0 25 23"><defs><linearGradient id="tl" x1="0" y1="0" x2="1" y2="1"><stop offset="0" stop-color="#f8ec90"/><stop offset="1" stop-color="#e09030"/></linearGradient></defs><path d="M2.300 3H7.600V11.800H20.600V17.800H2.300z" fill="url(#tl)" stroke="#a88838" stroke-width=".7"/><circle cx="5" cy="14.100" r="2.200" fill="none" stroke="#e03818" stroke-width="1.100"/><path d="M23.300 21.200H20.600L23.300 18.500z" fill="#000"/></svg>
<svg style="left:239px;top:186px" width="24" height="25" viewBox="0 0 24 25"><path d="M1.500 5 4 2H9.500V11.500H19.500L17 14.500V19.700H1.500z" fill="#e4bc50" stroke="#6a5820" stroke-width=".7"/><path d="M1.500 5H7V14.500H17V19.700H1.500z" fill="#f0d870" stroke="#6a5820" stroke-width=".7"/><path d="M7 5 9.500 2M7 14.500 9.500 11.500" stroke="#6a5820" stroke-width=".7"/><path d="M4 6.500V18M3 16.500H15" stroke="#b89838" stroke-width=".7" stroke-dasharray="1.500 1.500"/><ellipse cx="13" cy="15.300" rx="1.700" ry="3.800" fill="none" stroke="#e02810" stroke-width="1.300"/><path d="M23 24.200H20.300L23 21.500z" fill="#000"/></svg>
<svg style="left:267px;top:185px" width="25" height="26" viewBox="0 0 25 26"><path d="M1.300 1.600H6.700V8.800H15.600V15.400H1.300z" fill="url(#tl)" stroke="#6a5820" stroke-width=".8"/><path d="M11 9V11.800H8" fill="none" stroke="#555" stroke-width="1"/><path d="M12 8.500H13V10H12z" fill="#666"/><path d="M7.500 9 15 17" stroke="#fff" stroke-width="2.200"/><path d="M7.500 9 15 17" stroke="#666" stroke-width="1"/><path d="M13 14.500 14.500 19" stroke="#a01010" stroke-width="1.200"/><path d="M14 16 18.500 18" stroke="#a01010" stroke-width="1.200"/><ellipse cx="14" cy="22.300" rx="1.600" ry="2.200" fill="none" stroke="#a01010" stroke-width="1.100" transform="rotate(20 14 22.300)"/><ellipse cx="19.700" cy="19.500" rx="2.200" ry="1.500" fill="none" stroke="#a01010" stroke-width="1.100" transform="rotate(25 19.700 19.500)"/></svg>
<!-- viewport -->
<div style="left:294px;top:150px;width:886px;height:441px;background:#fff;border-left:1px solid #6c6c6c;border-top:1px solid #8c8c8c;border-bottom:1px solid #9a9a9a"></div>
<svg style="left:295px;top:151px" width="885" height="439" viewBox="295 151 885 439"><path d="M611.4 427.3 587.8 440.7 587.8 443.6 593.6 446.9 598.6 446.9 622.2 433.4z" fill="#1f84e4" stroke="#000" stroke-width="0.9" stroke-linejoin="round"/><path d="M587.8 443.6 593.6 446.9 593.6 451.4 587.8 448.1z" fill="#1e7edc" stroke="#000" stroke-width="0.9" stroke-linejoin="round"/><path d="M587.8 440.7 587.8 443.6 587.8 448.1 587.8 445.3z" fill="#1e7edc" stroke="#000" stroke-width="0.9" stroke-linejoin="round"/><path d="M593.6 446.9 598.6 446.9 598.6 451.4 593.6 451.4z" fill="#1862b2" stroke="#000" stroke-width="0.9" stroke-linejoin="round"/><path d="M598.6 446.9 622.2 433.4 622.2 438.0 598.6 451.4z" fill="#135294" stroke="#000" stroke-width="0.9" stroke-linejoin="round"/><path d="M652.9 451.0 629.3 464.5 629.3 467.3 635.1 470.6 640.1 470.6 663.7 457.2z" fill="#1f84e4" stroke="#000" stroke-width="0.9" stroke-linejoin="round"/><path d="M629.3 467.3 635.1 470.6 635.1 475.2 629.3 471.9z" fill="#1e7edc" stroke="#000" stroke-width="0.9" stroke-linejoin="round"/><path d="M629.3 464.5 629.3 467.3 629.3 471.9 629.3 469.0z" fill="#1e7edc" stroke="#000" stroke-width="0.9" stroke-linejoin="round"/><path d="M635.1 470.6 640.1 470.6 640.1 475.2 635.1 475.2z" fill="#1862b2" stroke="#000" stroke-width="0.9" stroke-linejoin="round"/><path d="M640.1 470.6 663.7 457.2 663.7 461.7 640.1 475.2z" fill="#135294" stroke="#000" stroke-width="0.9" stroke-linejoin="round"/><path d="M694.4 474.8 670.8 488.2 670.8 491.1 676.6 494.4 681.6 494.4 705.2 480.9z" fill="#1f84e4" stroke="#000" stroke-width="0.9" stroke-linejoin="round"/><path d="M670.8 491.1 676.6 494.4 676.6 498.9 670.8 495.6z" fill="#1e7edc" stroke="#000" stroke-width="0.9" stroke-linejoin="round"/><path d="M670.8 488.2 670.8 491.1 670.8 495.6 670.8 492.8z" fill="#1e7edc" stroke="#000" stroke-width="0.9" stroke-linejoin="round"/><path d="M676.6 494.4 681.6 494.4 681.6 498.9 676.6 498.9z" fill="#1862b2" stroke="#000" stroke-width="0.9" stroke-linejoin="round"/><path d="M681.6 494.4 705.2 480.9 705.2 485.5 681.6 498.9z" fill="#135294" stroke="#000" stroke-width="0.9" stroke-linejoin="round"/><path d="M735.9 498.5 712.3 512.0 712.3 514.8 718.1 518.1 723.1 518.1 746.7 504.7z" fill="#1f84e4" stroke="#000" stroke-width="0.9" stroke-linejoin="round"/><path d="M712.3 514.8 718.1 518.1 718.1 522.7 712.3 519.4z" fill="#1e7edc" stroke="#000" stroke-width="0.9" stroke-linejoin="round"/><path d="M712.3 512.0 712.3 514.8 712.3 519.4 712.3 516.5z" fill="#1e7edc" stroke="#000" stroke-width="0.9" stroke-linejoin="round"/><path d="M718.1 518.1 723.1 518.1 723.1 522.7 718.1 522.7z" fill="#1862b2" stroke="#000" stroke-width="0.9" stroke-linejoin="round"/><path d="M723.1 518.1 746.7 504.7 746.7 509.2 723.1 522.7z" fill="#135294" stroke="#000" stroke-width="0.9" stroke-linejoin="round"/><path d="M777.4 522.3 753.8 535.7 753.8 538.6 759.6 541.9 764.6 541.9 788.2 528.4z" fill="#1f84e4" stroke="#000" stroke-width="0.9" stroke-linejoin="round"/><path d="M753.8 538.6 759.6 541.9 759.6 546.4 753.8 543.1z" fill="#1e7edc" stroke="#000" stroke-width="0.9" stroke-linejoin="round"/><path d="M753.8 535.7 753.8 538.6 753.8 543.1 753.8 540.3z" fill="#1e7edc" stroke="#000" stroke-width="0.9" stroke-linejoin="round"/><path d="M759.6 541.9 764.6 541.9 764.6 546.4 759.6 546.4z" fill="#1862b2" stroke="#000" stroke-width="0.9" stroke-linejoin="round"/><path d="M764.6 541.9 788.2 528.4 788.2 533.0 764.6 546.4z" fill="#135294" stroke="#000" stroke-width="0.9" stroke-linejoin="round"/><path d="M588.0 314.2 803.0 437.2 886.0 390.0 671.0 267.0z" fill="#1f84e4" stroke="#000" stroke-width="0.9" stroke-linejoin="round"/><path d="M588.0 416.0 803.0 539.0 803.0 437.2 588.0 314.2z" fill="#1e7edc" stroke="#000" stroke-width="0.9" stroke-linejoin="round"/><path d="M803.0 539.0 808.8 535.7 809.6 530.0 879.3 490.3 880.2 495.1 886.0 491.8 886.0 390.0 803.0 437.2z" fill="#135294" stroke="#000" stroke-width="0.9" stroke-linejoin="round"/><path d="M601.3 283.6 682.4 237.7 871.5 345.8 865.4 354.0 860.3 369.0 818.8 392.0 816.8 392.0 789.5 394.6z" fill="#1f84e4" stroke="#000" stroke-width="0.9" stroke-linejoin="round"/><path d="M860.3 369.0 865.4 354.0 871.5 345.8 871.5 383.3 860.3 398.7z" fill="#15599f" stroke="#000" stroke-width="0.9" stroke-linejoin="round"/><path d="M818.8 391.9 860.3 369.0 860.3 398.7 857.2 401.8 855.1 399.7 824.4 417.2 823.7 421.3 818.8 421.3z" fill="#135294" stroke="#000" stroke-width="0.9" stroke-linejoin="round"/><path d="M655.2 260.6 673.8 271.9 693.9 261.9 675.5 250.2z" fill="#2b92f2" stroke="#000" stroke-width="0.9" stroke-linejoin="round"/><path d="M701.5 256.5 707.7 253.1 707.7 266.2 704.6 275.4 699.5 274.9 693.1 271.5 700.8 264.5 699.2 260.8z" fill="#135294" stroke="#000" stroke-width="0.9" stroke-linejoin="round"/><path d="M690.8 244.6 707.7 253.1 701.5 256.5 684.6 248.2z" fill="#1f84e4" stroke="#000" stroke-width="0.9" stroke-linejoin="round"/><path d="M696.7 284.4 715.3 295.6 735.4 285.6 717.0 274.0z" fill="#2b92f2" stroke="#000" stroke-width="0.9" stroke-linejoin="round"/><path d="M743.0 280.2 749.2 276.9 749.2 289.9 746.1 299.1 741.0 298.6 734.6 295.2 742.3 288.2 740.7 284.6z" fill="#135294" stroke="#000" stroke-width="0.9" stroke-linejoin="round"/><path d="M732.3 268.4 749.2 276.9 743.0 280.2 726.1 271.9z" fill="#1f84e4" stroke="#000" stroke-width="0.9" stroke-linejoin="round"/><path d="M738.2 308.1 756.8 319.4 776.9 309.4 758.5 297.8z" fill="#2b92f2" stroke="#000" stroke-width="0.9" stroke-linejoin="round"/><path d="M784.5 304.0 790.7 300.6 790.7 313.7 787.6 322.9 782.5 322.4 776.1 319.0 783.8 312.0 782.2 308.3z" fill="#135294" stroke="#000" stroke-width="0.9" stroke-linejoin="round"/><path d="M773.8 292.1 790.7 300.6 784.5 304.0 767.6 295.7z" fill="#1f84e4" stroke="#000" stroke-width="0.9" stroke-linejoin="round"/><path d="M779.7 331.9 798.3 343.1 818.4 333.1 800.0 321.5z" fill="#2b92f2" stroke="#000" stroke-width="0.9" stroke-linejoin="round"/><path d="M826.0 327.8 832.2 324.4 832.2 337.4 829.1 346.6 824.0 346.1 817.6 342.8 825.3 335.8 823.7 332.1z" fill="#135294" stroke="#000" stroke-width="0.9" stroke-linejoin="round"/><path d="M815.3 315.9 832.2 324.4 826.0 327.8 809.1 319.4z" fill="#1f84e4" stroke="#000" stroke-width="0.9" stroke-linejoin="round"/><path d="M821.2 355.6 839.8 366.9 859.9 356.9 841.5 345.2z" fill="#2b92f2" stroke="#000" stroke-width="0.9" stroke-linejoin="round"/><path d="M666.9 271.5 676.2 276.9 676.2 250.1 666.9 244.7z" fill="#1e7edc" stroke="#1e7edc" stroke-width="0.5" stroke-linejoin="round"/><path d="M666.9 244.7 676.2 250.1 676.4 247.4 667.0 242.0z" fill="#1e7edc" stroke="#1e7edc" stroke-width="0.5" stroke-linejoin="round"/><path d="M667.0 242.0 676.4 247.4 676.8 244.6 667.4 239.2z" fill="#1e7fdd" stroke="#1e7fdd" stroke-width="0.5" stroke-linejoin="round"/><path d="M667.4 239.2 676.8 244.6 677.6 241.7 668.2 236.3z" fill="#1e80de" stroke="#1e80de" stroke-width="0.5" stroke-linejoin="round"/><path d="M668.2 236.3 677.6 241.7 678.6 238.7 669.2 233.4z" fill="#2183e0" stroke="#2183e0" stroke-width="0.5" stroke-linejoin="round"/><path d="M669.2 233.4 678.6 238.7 679.8 235.8 670.5 230.5z" fill="#288ae5" stroke="#288ae5" stroke-width="0.5" stroke-linejoin="round"/><path d="M670.5 230.5 679.8 235.8 681.3 233.0 672.0 227.6z" fill="#3598ef" stroke="#3598ef" stroke-width="0.5" stroke-linejoin="round"/><path d="M672.0 227.6 681.3 233.0 683.0 230.3 673.7 224.9z" fill="#41a4f6" stroke="#41a4f6" stroke-width="0.5" stroke-linejoin="round"/><path d="M673.7 224.9 683.0 230.3 684.9 227.8 675.6 222.4z" fill="#40a3f6" stroke="#40a3f6" stroke-width="0.5" stroke-linejoin="round"/><path d="M675.6 222.4 684.9 227.8 687.0 225.4 677.6 220.1z" fill="#3497ee" stroke="#3497ee" stroke-width="0.5" stroke-linejoin="round"/><path d="M677.6 220.1 687.0 225.4 689.1 223.4 679.8 218.0z" fill="#278be7" stroke="#278be7" stroke-width="0.5" stroke-linejoin="round"/><path d="M679.8 218.0 689.1 223.4 691.4 221.6 682.0 216.2z" fill="#2185e4" stroke="#2185e4" stroke-width="0.5" stroke-linejoin="round"/><path d="M682.0 216.2 691.4 221.6 693.7 220.1 684.3 214.8z" fill="#1f84e4" stroke="#1f84e4" stroke-width="0.5" stroke-linejoin="round"/><path d="M684.3 214.8 693.7 220.1 717.3 206.7 707.9 201.3z" fill="#1f84e4" stroke="#1f84e4" stroke-width="0.5" stroke-linejoin="round"/><path d="M707.9 201.3 717.3 206.7 724.6 202.3 719.8 199.6z" fill="#1f84e4" stroke="#000" stroke-width="0.9" stroke-linejoin="round"/><path d="M666.9 271.5 666.9 244.7 667.0 242.0 667.4 239.2 668.2 236.3 669.2 233.4 670.5 230.5 672.0 227.6 673.7 224.9 675.6 222.4 677.6 220.1 679.8 218.0 682.0 216.2 684.3 214.8 707.9 201.3" fill="none" stroke="#000" stroke-width="0.9" stroke-linejoin="round" stroke-linecap="round"/><path d="M676.2 276.9 676.2 250.1 676.4 247.4 676.8 244.6 677.6 241.7 678.6 238.7 679.8 235.8 681.3 233.0 683.0 230.3 684.9 227.8 687.0 225.4 689.1 223.4 691.4 221.6 693.7 220.1 717.3 206.7 717.3 216.2 693.7 229.7 692.5 230.5 691.3 231.4 690.2 232.5 689.1 233.7 688.1 235.0 687.2 236.4 686.4 237.9 685.8 239.4 685.2 241.0 684.8 242.5 684.6 244.0 684.5 245.4 684.5 272.2z" fill="#1862b2" stroke="#000" stroke-width="0.9" stroke-linejoin="round"/><path d="M717.3 206.7 724.6 202.3 724.6 207.1 717.3 216.2z" fill="#135294" stroke="#000" stroke-width="0.9" stroke-linejoin="round"/><path d="M676.2 276.9 684.5 272.2 684.5 245.4 676.2 250.1z" fill="#135294"/><path d="M676.2 276.9 676.2 250.1" fill="none" stroke="#000" stroke-width="0.9" stroke-linejoin="round" stroke-linecap="round"/><path d="M684.5 272.2 684.5 245.4" fill="none" stroke="#000" stroke-width="0.9" stroke-linejoin="round" stroke-linecap="round"/><path d="M691.8 219.1 715.4 205.6" fill="none" stroke="#000" stroke-width="0.6" stroke-linejoin="round" stroke-linecap="round"/><path d="M684.3 214.8 693.7 220.1 693.7 229.7" fill="none" stroke="#000" stroke-width="0.9" stroke-linejoin="round" stroke-linecap="round"/><path d="M707.9 201.3 717.3 206.7 717.3 216.2" fill="none" stroke="#000" stroke-width="0.9" stroke-linejoin="round" stroke-linecap="round"/><defs><linearGradient id="cg11" x1="0" x2="1"><stop offset="0" stop-color="#1c74cf"/><stop offset=".3" stop-color="#2288e6"/><stop offset=".55" stop-color="#1b6ec6"/><stop offset="1" stop-color="#124e8f"/></linearGradient><radialGradient id="cg11d" cx=".38" cy=".3" r=".75"><stop offset="0" stop-color="#4aaefc"/><stop offset=".5" stop-color="#2288e6"/><stop offset="1" stop-color="#175fae"/></radialGradient></defs><ellipse cx="675.5" cy="280.6" rx="17.5" ry="10.3" fill="#1862b2" stroke="#000" stroke-width=".8"/><path d="M660.0 240.3V279.1A14.5 8.3 0 0 0 689.0 279.1V240.3z" fill="url(#cg11)" stroke="#000" stroke-width=".9"/><path d="M660.0 240.3A14.5 14.5 0 0 1 689.0 240.3A14.5 8.3 0 0 1 660.0 240.3z" fill="url(#cg11d)" stroke="#000" stroke-width=".9"/><path d="M660.0 240.3A14.5 8.3 0 0 0 689.0 240.3" fill="none" stroke="#000" stroke-width=".9"/><path d="M671.5 226.1Q686.0 227.8 684.0 247.6A14.5 8.3 0 0 0 689.0 240.3A14.5 14.5 0 0 0 671.5 226.1z" fill="#1862b2" stroke="#000" stroke-width=".8"/><path d="M684.0 247.8V285.1" stroke="#000" stroke-width=".8"/><path d="M708.4 295.3 717.7 300.6 717.7 273.9 708.4 268.5z" fill="#1e7edc" stroke="#1e7edc" stroke-width="0.5" stroke-linejoin="round"/><path d="M708.4 268.5 717.7 273.9 717.9 271.2 708.5 265.8z" fill="#1e7edc" stroke="#1e7edc" stroke-width="0.5" stroke-linejoin="round"/><path d="M708.5 265.8 717.9 271.2 718.3 268.3 708.9 263.0z" fill="#1e7fdd" stroke="#1e7fdd" stroke-width="0.5" stroke-linejoin="round"/><path d="M708.9 263.0 718.3 268.3 719.1 265.4 709.7 260.1z" fill="#1e80de" stroke="#1e80de" stroke-width="0.5" stroke-linejoin="round"/><path d="M709.7 260.1 719.1 265.4 720.1 262.5 710.7 257.1z" fill="#2183e0" stroke="#2183e0" stroke-width="0.5" stroke-linejoin="round"/><path d="M710.7 257.1 720.1 262.5 721.3 259.6 712.0 254.2z" fill="#288ae5" stroke="#288ae5" stroke-width="0.5" stroke-linejoin="round"/><path d="M712.0 254.2 721.3 259.6 722.8 256.8 713.5 251.4z" fill="#3598ef" stroke="#3598ef" stroke-width="0.5" stroke-linejoin="round"/><path d="M713.5 251.4 722.8 256.8 724.5 254.1 715.2 248.7z" fill="#41a4f6" stroke="#41a4f6" stroke-width="0.5" stroke-linejoin="round"/><path d="M715.2 248.7 724.5 254.1 726.4 251.5 717.1 246.2z" fill="#40a3f6" stroke="#40a3f6" stroke-width="0.5" stroke-linejoin="round"/><path d="M717.1 246.2 726.4 251.5 728.5 249.2 719.1 243.8z" fill="#3497ee" stroke="#3497ee" stroke-width="0.5" stroke-linejoin="round"/><path d="M719.1 243.8 728.5 249.2 730.6 247.1 721.3 241.8z" fill="#278be7" stroke="#278be7" stroke-width="0.5" stroke-linejoin="round"/><path d="M721.3 241.8 730.6 247.1 732.9 245.3 723.5 240.0z" fill="#2185e4" stroke="#2185e4" stroke-width="0.5" stroke-linejoin="round"/><path d="M723.5 240.0 732.9 245.3 735.2 243.9 725.8 238.5z" fill="#1f84e4" stroke="#1f84e4" stroke-width="0.5" stroke-linejoin="round"/><path d="M725.8 238.5 735.2 243.9 758.8 230.4 749.4 225.1z" fill="#1f84e4" stroke="#1f84e4" stroke-width="0.5" stroke-linejoin="round"/><path d="M749.4 225.1 758.8 230.4 766.1 226.1 761.3 223.3z" fill="#1f84e4" stroke="#000" stroke-width="0.9" stroke-linejoin="round"/><path d="M708.4 295.3 708.4 268.5 708.5 265.8 708.9 263.0 709.7 260.1 710.7 257.1 712.0 254.2 713.5 251.4 715.2 248.7 717.1 246.2 719.1 243.8 721.3 241.8 723.5 240.0 725.8 238.5 749.4 225.1" fill="none" stroke="#000" stroke-width="0.9" stroke-linejoin="round" stroke-linecap="round"/><path d="M717.7 300.6 717.7 273.9 717.9 271.2 718.3 268.3 719.1 265.4 720.1 262.5 721.3 259.6 722.8 256.8 724.5 254.1 726.4 251.5 728.5 249.2 730.6 247.1 732.9 245.3 735.2 243.9 758.8 230.4 758.8 240.0 735.2 253.4 734.0 254.2 732.8 255.1 731.7 256.2 730.6 257.4 729.6 258.8 728.7 260.2 727.9 261.7 727.3 263.2 726.7 264.7 726.3 266.2 726.1 267.7 726.0 269.1 726.0 295.9z" fill="#1862b2" stroke="#000" stroke-width="0.9" stroke-linejoin="round"/><path d="M758.8 230.4 766.1 226.1 766.1 230.9 758.8 240.0z" fill="#135294" stroke="#000" stroke-width="0.9" stroke-linejoin="round"/><path d="M717.7 300.6 726.0 295.9 726.0 269.1 717.7 273.9z" fill="#135294"/><path d="M717.7 300.6 717.7 273.9" fill="none" stroke="#000" stroke-width="0.9" stroke-linejoin="round" stroke-linecap="round"/><path d="M726.0 295.9 726.0 269.1" fill="none" stroke="#000" stroke-width="0.9" stroke-linejoin="round" stroke-linecap="round"/><path d="M733.3 242.8 756.9 229.4" fill="none" stroke="#000" stroke-width="0.6" stroke-linejoin="round" stroke-linecap="round"/><path d="M725.8 238.5 735.2 243.9 735.2 253.4" fill="none" stroke="#000" stroke-width="0.9" stroke-linejoin="round" stroke-linecap="round"/><path d="M749.4 225.1 758.8 230.4 758.8 240.0" fill="none" stroke="#000" stroke-width="0.9" stroke-linejoin="round" stroke-linecap="round"/><path d="M749.9 319.0 759.2 324.4 759.2 297.6 749.9 292.2z" fill="#1e7edc" stroke="#1e7edc" stroke-width="0.5" stroke-linejoin="round"/><path d="M749.9 292.2 759.2 297.6 759.4 294.9 750.0 289.5z" fill="#1e7edc" stroke="#1e7edc" stroke-width="0.5" stroke-linejoin="round"/><path d="M750.0 289.5 759.4 294.9 759.8 292.1 750.4 286.7z" fill="#1e7fdd" stroke="#1e7fdd" stroke-width="0.5" stroke-linejoin="round"/><path d="M750.4 286.7 759.8 292.1 760.6 289.2 751.2 283.8z" fill="#1e80de" stroke="#1e80de" stroke-width="0.5" stroke-linejoin="round"/><path d="M751.2 283.8 760.6 289.2 761.6 286.2 752.2 280.9z" fill="#2183e0" stroke="#2183e0" stroke-width="0.5" stroke-linejoin="round"/><path d="M752.2 280.9 761.6 286.2 762.8 283.3 753.5 278.0z" fill="#288ae5" stroke="#288ae5" stroke-width="0.5" stroke-linejoin="round"/><path d="M753.5 278.0 762.8 283.3 764.3 280.5 755.0 275.1z" fill="#3598ef" stroke="#3598ef" stroke-width="0.5" stroke-linejoin="round"/><path d="M755.0 275.1 764.3 280.5 766.0 277.8 756.7 272.4z" fill="#41a4f6" stroke="#41a4f6" stroke-width="0.5" stroke-linejoin="round"/><path d="M756.7 272.4 766.0 277.8 767.9 275.3 758.6 269.9z" fill="#40a3f6" stroke="#40a3f6" stroke-width="0.5" stroke-linejoin="round"/><path d="M758.6 269.9 767.9 275.3 770.0 272.9 760.6 267.6z" fill="#3497ee" stroke="#3497ee" stroke-width="0.5" stroke-linejoin="round"/><path d="M760.6 267.6 770.0 272.9 772.1 270.9 762.8 265.5z" fill="#278be7" stroke="#278be7" stroke-width="0.5" stroke-linejoin="round"/><path d="M762.8 265.5 772.1 270.9 774.4 269.1 765.0 263.7z" fill="#2185e4" stroke="#2185e4" stroke-width="0.5" stroke-linejoin="round"/><path d="M765.0 263.7 774.4 269.1 776.7 267.6 767.3 262.3z" fill="#1f84e4" stroke="#1f84e4" stroke-width="0.5" stroke-linejoin="round"/><path d="M767.3 262.3 776.7 267.6 800.3 254.2 790.9 248.8z" fill="#1f84e4" stroke="#1f84e4" stroke-width="0.5" stroke-linejoin="round"/><path d="M790.9 248.8 800.3 254.2 807.6 249.8 802.8 247.1z" fill="#1f84e4" stroke="#000" stroke-width="0.9" stroke-linejoin="round"/><path d="M749.9 319.0 749.9 292.2 750.0 289.5 750.4 286.7 751.2 283.8 752.2 280.9 753.5 278.0 755.0 275.1 756.7 272.4 758.6 269.9 760.6 267.6 762.8 265.5 765.0 263.7 767.3 262.3 790.9 248.8" fill="none" stroke="#000" stroke-width="0.9" stroke-linejoin="round" stroke-linecap="round"/><path d="M759.2 324.4 759.2 297.6 759.4 294.9 759.8 292.1 760.6 289.2 761.6 286.2 762.8 283.3 764.3 280.5 766.0 277.8 767.9 275.3 770.0 272.9 772.1 270.9 774.4 269.1 776.7 267.6 800.3 254.2 800.3 263.7 776.7 277.2 775.5 278.0 774.3 278.9 773.2 280.0 772.1 281.2 771.1 282.5 770.2 283.9 769.4 285.4 768.8 286.9 768.2 288.5 767.8 290.0 767.6 291.5 767.5 292.9 767.5 319.7z" fill="#1862b2" stroke="#000" stroke-width="0.9" stroke-linejoin="round"/><path d="M800.3 254.2 807.6 249.8 807.6 254.6 800.3 263.7z" fill="#135294" stroke="#000" stroke-width="0.9" stroke-linejoin="round"/><path d="M759.2 324.4 767.5 319.7 767.5 292.9 759.2 297.6z" fill="#135294"/><path d="M759.2 324.4 759.2 297.6" fill="none" stroke="#000" stroke-width="0.9" stroke-linejoin="round" stroke-linecap="round"/><path d="M767.5 319.7 767.5 292.9" fill="none" stroke="#000" stroke-width="0.9" stroke-linejoin="round" stroke-linecap="round"/><path d="M774.8 266.6 798.4 253.1" fill="none" stroke="#000" stroke-width="0.6" stroke-linejoin="round" stroke-linecap="round"/><path d="M767.3 262.3 776.7 267.6 776.7 277.2" fill="none" stroke="#000" stroke-width="0.9" stroke-linejoin="round" stroke-linecap="round"/><path d="M790.9 248.8 800.3 254.2 800.3 263.7" fill="none" stroke="#000" stroke-width="0.9" stroke-linejoin="round" stroke-linecap="round"/><path d="M791.4 342.8 800.7 348.1 800.7 321.4 791.4 316.0z" fill="#1e7edc" stroke="#1e7edc" stroke-width="0.5" stroke-linejoin="round"/><path d="M791.4 316.0 800.7 321.4 800.9 318.7 791.5 313.3z" fill="#1e7edc" stroke="#1e7edc" stroke-width="0.5" stroke-linejoin="round"/><path d="M791.5 313.3 800.9 318.7 801.3 315.8 791.9 310.5z" fill="#1e7fdd" stroke="#1e7fdd" stroke-width="0.5" stroke-linejoin="round"/><path d="M791.9 310.5 801.3 315.8 802.1 312.9 792.7 307.6z" fill="#1e80de" stroke="#1e80de" stroke-width="0.5" stroke-linejoin="round"/><path d="M792.7 307.6 802.1 312.9 803.1 310.0 793.7 304.6z" fill="#2183e0" stroke="#2183e0" stroke-width="0.5" stroke-linejoin="round"/><path d="M793.7 304.6 803.1 310.0 804.3 307.1 795.0 301.7z" fill="#288ae5" stroke="#288ae5" stroke-width="0.5" stroke-linejoin="round"/><path d="M795.0 301.7 804.3 307.1 805.8 304.3 796.5 298.9z" fill="#3598ef" stroke="#3598ef" stroke-width="0.5" stroke-linejoin="round"/><path d="M796.5 298.9 805.8 304.3 807.5 301.6 798.2 296.2z" fill="#41a4f6" stroke="#41a4f6" stroke-width="0.5" stroke-linejoin="round"/><path d="M798.2 296.2 807.5 301.6 809.4 299.0 800.1 293.7z" fill="#40a3f6" stroke="#40a3f6" stroke-width="0.5" stroke-linejoin="round"/><path d="M800.1 293.7 809.4 299.0 811.5 296.7 802.1 291.3z" fill="#3497ee" stroke="#3497ee" stroke-width="0.5" stroke-linejoin="round"/><path d="M802.1 291.3 811.5 296.7 813.6 294.6 804.3 289.3z" fill="#278be7" stroke="#278be7" stroke-width="0.5" stroke-linejoin="round"/><path d="M804.3 289.3 813.6 294.6 815.9 292.8 806.5 287.5z" fill="#2185e4" stroke="#2185e4" stroke-width="0.5" stroke-linejoin="round"/><path d="M806.5 287.5 815.9 292.8 818.2 291.4 808.8 286.0z" fill="#1f84e4" stroke="#1f84e4" stroke-width="0.5" stroke-linejoin="round"/><path d="M808.8 286.0 818.2 291.4 841.8 277.9 832.4 272.6z" fill="#1f84e4" stroke="#1f84e4" stroke-width="0.5" stroke-linejoin="round"/><path d="M832.4 272.6 841.8 277.9 849.1 273.6 844.3 270.8z" fill="#1f84e4" stroke="#000" stroke-width="0.9" stroke-linejoin="round"/><path d="M791.4 342.8 791.4 316.0 791.5 313.3 791.9 310.5 792.7 307.6 793.7 304.6 795.0 301.7 796.5 298.9 798.2 296.2 800.1 293.7 802.1 291.3 804.3 289.3 806.5 287.5 808.8 286.0 832.4 272.6" fill="none" stroke="#000" stroke-width="0.9" stroke-linejoin="round" stroke-linecap="round"/><path d="M800.7 348.1 800.7 321.4 800.9 318.7 801.3 315.8 802.1 312.9 803.1 310.0 804.3 307.1 805.8 304.3 807.5 301.6 809.4 299.0 811.5 296.7 813.6 294.6 815.9 292.8 818.2 291.4 841.8 277.9 841.8 287.5 818.2 300.9 817.0 301.7 815.8 302.6 814.7 303.7 813.6 304.9 812.6 306.3 811.7 307.7 810.9 309.2 810.3 310.7 809.7 312.2 809.3 313.7 809.1 315.2 809.0 316.6 809.0 343.4z" fill="#1862b2" stroke="#000" stroke-width="0.9" stroke-linejoin="round"/><path d="M841.8 277.9 849.1 273.6 849.1 278.4 841.8 287.5z" fill="#135294" stroke="#000" stroke-width="0.9" stroke-linejoin="round"/><path d="M800.7 348.1 809.0 343.4 809.0 316.6 800.7 321.4z" fill="#135294"/><path d="M800.7 348.1 800.7 321.4" fill="none" stroke="#000" stroke-width="0.9" stroke-linejoin="round" stroke-linecap="round"/><path d="M809.0 343.4 809.0 316.6" fill="none" stroke="#000" stroke-width="0.9" stroke-linejoin="round" stroke-linecap="round"/><path d="M816.3 290.3 839.9 276.9" fill="none" stroke="#000" stroke-width="0.6" stroke-linejoin="round" stroke-linecap="round"/><path d="M808.8 286.0 818.2 291.4 818.2 300.9" fill="none" stroke="#000" stroke-width="0.9" stroke-linejoin="round" stroke-linecap="round"/><path d="M832.4 272.6 841.8 277.9 841.8 287.5" fill="none" stroke="#000" stroke-width="0.9" stroke-linejoin="round" stroke-linecap="round"/><defs><linearGradient id="cg41" x1="0" x2="1"><stop offset="0" stop-color="#1c74cf"/><stop offset=".3" stop-color="#2288e6"/><stop offset=".55" stop-color="#1b6ec6"/><stop offset="1" stop-color="#124e8f"/></linearGradient><radialGradient id="cg41d" cx=".38" cy=".3" r=".75"><stop offset="0" stop-color="#4aaefc"/><stop offset=".5" stop-color="#2288e6"/><stop offset="1" stop-color="#175fae"/></radialGradient></defs><ellipse cx="800.0" cy="351.8" rx="17.5" ry="10.3" fill="#1862b2" stroke="#000" stroke-width=".8"/><path d="M784.5 311.6V350.3A14.5 8.3 0 0 0 813.5 350.3V311.6z" fill="url(#cg41)" stroke="#000" stroke-width=".9"/><path d="M784.5 311.6A14.5 14.5 0 0 1 813.5 311.6A14.5 8.3 0 0 1 784.5 311.6z" fill="url(#cg41d)" stroke="#000" stroke-width=".9"/><path d="M784.5 311.6A14.5 8.3 0 0 0 813.5 311.6" fill="none" stroke="#000" stroke-width=".9"/><path d="M796.0 297.4Q810.5 299.1 808.5 318.9A14.5 8.3 0 0 0 813.5 311.6A14.5 14.5 0 0 0 796.0 297.4z" fill="#1862b2" stroke="#000" stroke-width=".8"/><path d="M808.5 319.1V356.3" stroke="#000" stroke-width=".8"/><path d="M832.9 366.5 842.2 371.9 842.2 345.1 832.9 339.7z" fill="#1e7edc" stroke="#1e7edc" stroke-width="0.5" stroke-linejoin="round"/><path d="M832.9 339.7 842.2 345.1 842.4 342.4 833.0 337.0z" fill="#1e7edc" stroke="#1e7edc" stroke-width="0.5" stroke-linejoin="round"/><path d="M833.0 337.0 842.4 342.4 842.8 339.6 833.4 334.2z" fill="#1e7fdd" stroke="#1e7fdd" stroke-width="0.5" stroke-linejoin="round"/><path d="M833.4 334.2 842.8 339.6 843.6 336.7 834.2 331.3z" fill="#1e80de" stroke="#1e80de" stroke-width="0.5" stroke-linejoin="round"/><path d="M834.2 331.3 843.6 336.7 844.6 333.7 835.2 328.4z" fill="#2183e0" stroke="#2183e0" stroke-width="0.5" stroke-linejoin="round"/><path d="M835.2 328.4 844.6 333.7 845.8 330.8 836.5 325.5z" fill="#288ae5" stroke="#288ae5" stroke-width="0.5" stroke-linejoin="round"/><path d="M836.5 325.5 845.8 330.8 847.3 328.0 838.0 322.6z" fill="#3598ef" stroke="#3598ef" stroke-width="0.5" stroke-linejoin="round"/><path d="M838.0 322.6 847.3 328.0 849.0 325.3 839.7 319.9z" fill="#41a4f6" stroke="#41a4f6" stroke-width="0.5" stroke-linejoin="round"/><path d="M839.7 319.9 849.0 325.3 850.9 322.8 841.6 317.4z" fill="#40a3f6" stroke="#40a3f6" stroke-width="0.5" stroke-linejoin="round"/><path d="M841.6 317.4 850.9 322.8 853.0 320.4 843.6 315.1z" fill="#3497ee" stroke="#3497ee" stroke-width="0.5" stroke-linejoin="round"/><path d="M843.6 315.1 853.0 320.4 855.1 318.4 845.8 313.0z" fill="#278be7" stroke="#278be7" stroke-width="0.5" stroke-linejoin="round"/><path d="M845.8 313.0 855.1 318.4 857.4 316.6 848.0 311.2z" fill="#2185e4" stroke="#2185e4" stroke-width="0.5" stroke-linejoin="round"/><path d="M848.0 311.2 857.4 316.6 859.7 315.1 850.3 309.8z" fill="#1f84e4" stroke="#1f84e4" stroke-width="0.5" stroke-linejoin="round"/><path d="M850.3 309.8 859.7 315.1 883.3 301.7 873.9 296.3z" fill="#1f84e4" stroke="#1f84e4" stroke-width="0.5" stroke-linejoin="round"/><path d="M873.9 296.3 883.3 301.7 890.6 297.3 885.8 294.6z" fill="#1f84e4" stroke="#000" stroke-width="0.9" stroke-linejoin="round"/><path d="M832.9 366.5 832.9 339.7 833.0 337.0 833.4 334.2 834.2 331.3 835.2 328.4 836.5 325.5 838.0 322.6 839.7 319.9 841.6 317.4 843.6 315.1 845.8 313.0 848.0 311.2 850.3 309.8 873.9 296.3" fill="none" stroke="#000" stroke-width="0.9" stroke-linejoin="round" stroke-linecap="round"/><path d="M842.2 371.9 842.2 345.1 842.4 342.4 842.8 339.6 843.6 336.7 844.6 333.7 845.8 330.8 847.3 328.0 849.0 325.3 850.9 322.8 853.0 320.4 855.1 318.4 857.4 316.6 859.7 315.1 883.3 301.7 883.3 311.2 859.7 324.7 858.5 325.5 857.3 326.4 856.2 327.5 855.1 328.7 854.1 330.0 853.2 331.4 852.4 332.9 851.8 334.4 851.2 336.0 850.8 337.5 850.6 339.0 850.5 340.4 850.5 367.2z" fill="#1862b2" stroke="#000" stroke-width="0.9" stroke-linejoin="round"/><path d="M883.3 301.7 890.6 297.3 890.6 302.1 883.3 311.2z" fill="#135294" stroke="#000" stroke-width="0.9" stroke-linejoin="round"/><path d="M842.2 371.9 850.5 367.2 850.5 340.4 842.2 345.1z" fill="#135294"/><path d="M842.2 371.9 842.2 345.1" fill="none" stroke="#000" stroke-width="0.9" stroke-linejoin="round" stroke-linecap="round"/><path d="M850.5 367.2 850.5 340.4" fill="none" stroke="#000" stroke-width="0.9" stroke-linejoin="round" stroke-linecap="round"/><path d="M857.8 314.1 881.4 300.6" fill="none" stroke="#000" stroke-width="0.6" stroke-linejoin="round" stroke-linecap="round"/><path d="M850.3 309.8 859.7 315.1 859.7 324.7" fill="none" stroke="#000" stroke-width="0.9" stroke-linejoin="round" stroke-linecap="round"/><path d="M873.9 296.3 883.3 301.7 883.3 311.2" fill="none" stroke="#000" stroke-width="0.9" stroke-linejoin="round" stroke-linecap="round"/><path d="M624.3 335.0 641.7 329.4 660.8 336.0 643.4 345.9z" fill="#2b92f2" stroke="#000" stroke-width="0.9" stroke-linejoin="round"/><path d="M601.3 283.5 624.3 296.7 641.7 286.8 618.7 273.6z" fill="#1f84e4" stroke="#000" stroke-width="0.9" stroke-linejoin="round"/><path d="M613.7 281.2 623.3 286.7 632.4 281.5 622.9 276.0z" fill="#2b92f2" stroke="#000" stroke-width="0.9" stroke-linejoin="round"/><path d="M601.3 321.8 624.3 335.0 624.3 296.7 601.3 283.5z" fill="#1e7edc" stroke="#000" stroke-width="0.9" stroke-linejoin="round"/><path d="M624.3 335.0 641.7 329.4 641.7 286.8 624.3 296.7z" fill="#135294" stroke="#000" stroke-width="0.9" stroke-linejoin="round"/><path d="M625.1 294.0 634.5 299.4 634.5 271.2 625.1 265.8z" fill="#2389ea" stroke="#000" stroke-width="0.9" stroke-linejoin="round"/><path d="M625.1 265.8 634.5 271.2 634.4 270.1 625.1 264.8z" fill="#2b92f2" stroke="#2b92f2" stroke-width="0.5" stroke-linejoin="round"/><path d="M625.1 264.8 634.4 270.1 634.2 269.2 624.8 263.9z" fill="#2889e5" stroke="#2889e5" stroke-width="0.5" stroke-linejoin="round"/><path d="M624.8 263.9 634.2 269.2 633.8 268.5 624.4 263.1z" fill="#2581d9" stroke="#2581d9" stroke-width="0.5" stroke-linejoin="round"/><path d="M624.4 263.1 633.8 268.5 633.2 267.9 623.9 262.6z" fill="#2178cc" stroke="#2178cc" stroke-width="0.5" stroke-linejoin="round"/><path d="M623.9 262.6 633.2 267.9 632.6 267.5 623.2 262.2z" fill="#1e70c0" stroke="#1e70c0" stroke-width="0.5" stroke-linejoin="round"/><path d="M623.2 262.2 632.6 267.5 631.8 267.3 622.4 262.0z" fill="#1b67b3" stroke="#1b67b3" stroke-width="0.5" stroke-linejoin="round"/><path d="M625.1 294.0 625.1 265.8 625.1 264.8 624.8 263.9 624.4 263.1 623.9 262.6 623.2 262.2 622.4 262.0" fill="none" stroke="#000" stroke-width="0.9" stroke-linejoin="round" stroke-linecap="round"/><path d="M591.1 269.4 600.5 274.8 629.1 258.5 619.7 253.1z" fill="#1f84e4" stroke="#1f84e4" stroke-width="0.5" stroke-linejoin="round"/><path d="M619.7 253.1 629.1 258.5 631.2 257.5 621.8 252.1z" fill="#1f84e4" stroke="#1f84e4" stroke-width="0.5" stroke-linejoin="round"/><path d="M621.8 252.1 631.2 257.5 633.2 256.9 623.9 251.5z" fill="#1e7edb" stroke="#1e7edb" stroke-width="0.5" stroke-linejoin="round"/><path d="M623.9 251.5 633.2 256.9 635.1 256.7 625.8 251.3z" fill="#1c79d2" stroke="#1c79d2" stroke-width="0.5" stroke-linejoin="round"/><path d="M625.8 251.3 635.1 256.7 636.9 256.9 627.6 251.5z" fill="#1b73c9" stroke="#1b73c9" stroke-width="0.5" stroke-linejoin="round"/><path d="M627.6 251.5 636.9 256.9 638.6 257.5 629.2 252.1z" fill="#1a6ec0" stroke="#1a6ec0" stroke-width="0.5" stroke-linejoin="round"/><path d="M629.2 252.1 638.6 257.5 639.9 258.5 630.6 253.1z" fill="#1868b8" stroke="#1868b8" stroke-width="0.5" stroke-linejoin="round"/><path d="M630.6 253.1 639.9 258.5 641.1 259.8 631.8 254.5z" fill="#1763af" stroke="#1763af" stroke-width="0.5" stroke-linejoin="round"/><path d="M631.8 254.5 641.1 259.8 642.0 261.5 632.6 256.2z" fill="#165da6" stroke="#165da6" stroke-width="0.5" stroke-linejoin="round"/><path d="M591.1 269.4 619.7 253.1 621.8 252.1 623.9 251.5 625.8 251.3 627.6 251.5 629.2 252.1 630.6 253.1 631.8 254.5 632.6 256.2" fill="none" stroke="#000" stroke-width="0.9" stroke-linejoin="round" stroke-linecap="round"/><path d="M591.1 269.4 600.5 274.8 587.4 282.0 582.6 279.2z" fill="#1f84e4" stroke="#000" stroke-width="0.9" stroke-linejoin="round"/><path d="M582.6 279.2 587.4 282.0 587.4 286.8 582.6 284.0z" fill="#1e7edc" stroke="#000" stroke-width="0.9" stroke-linejoin="round"/><path d="M600.5 274.8 629.1 258.5 631.2 257.4 633.3 256.8 635.3 256.7 637.1 256.9 638.8 257.6 640.2 258.7 641.3 260.1 642.1 262.0 642.6 264.1 642.8 266.5 642.8 294.7 634.5 299.4 634.5 271.2 634.4 270.2 634.2 269.4 633.9 268.7 633.4 268.1 632.9 267.7 632.3 267.4 631.5 267.3 630.8 267.4 629.9 267.6 629.1 268.0 600.5 284.3z" fill="#1862b2" stroke="#000" stroke-width="0.9" stroke-linejoin="round"/><path d="M600.5 274.8 587.4 282.0 587.4 286.8 600.5 284.3z" fill="#135294" stroke="#000" stroke-width="0.9" stroke-linejoin="round"/><path d="M634.5 299.4 642.8 294.7 642.8 266.5 634.5 271.2z" fill="#135294"/><path d="M642.8 294.7 642.8 266.5" fill="none" stroke="#000" stroke-width="0.9" stroke-linejoin="round" stroke-linecap="round"/><path d="M634.5 299.4 634.5 271.2" fill="none" stroke="#000" stroke-width="0.9" stroke-linejoin="round" stroke-linecap="round"/><path d="M591.1 269.4 600.5 274.8 600.5 284.3" fill="none" stroke="#000" stroke-width="0.9" stroke-linejoin="round" stroke-linecap="round"/><path d="M619.7 253.1 629.1 258.5 629.1 268.0" fill="none" stroke="#000" stroke-width="0.9" stroke-linejoin="round" stroke-linecap="round"/><path d="M598.6 273.7 627.2 257.4" fill="none" stroke="#000" stroke-width="0.6" stroke-linejoin="round" stroke-linecap="round"/><path d="M665.8 358.7 683.2 353.1 702.3 359.7 684.9 369.6z" fill="#2b92f2" stroke="#000" stroke-width="0.9" stroke-linejoin="round"/><path d="M642.8 307.3 665.8 320.5 683.2 310.6 660.2 297.4z" fill="#1f84e4" stroke="#000" stroke-width="0.9" stroke-linejoin="round"/><path d="M655.2 305.0 664.8 310.4 673.9 305.2 664.4 299.8z" fill="#2b92f2" stroke="#000" stroke-width="0.9" stroke-linejoin="round"/><path d="M642.8 345.5 665.8 358.7 665.8 320.5 642.8 307.3z" fill="#1e7edc" stroke="#000" stroke-width="0.9" stroke-linejoin="round"/><path d="M665.8 358.7 683.2 353.1 683.2 310.6 665.8 320.5z" fill="#135294" stroke="#000" stroke-width="0.9" stroke-linejoin="round"/><path d="M666.6 317.8 676.0 323.1 676.0 294.9 666.6 289.6z" fill="#2389ea" stroke="#000" stroke-width="0.9" stroke-linejoin="round"/><path d="M666.6 289.6 676.0 294.9 675.9 293.9 666.6 288.6z" fill="#2b92f2" stroke="#2b92f2" stroke-width="0.5" stroke-linejoin="round"/><path d="M666.6 288.6 675.9 293.9 675.7 293.0 666.3 287.6z" fill="#2889e5" stroke="#2889e5" stroke-width="0.5" stroke-linejoin="round"/><path d="M666.3 287.6 675.7 293.0 675.3 292.2 665.9 286.9z" fill="#2581d9" stroke="#2581d9" stroke-width="0.5" stroke-linejoin="round"/><path d="M665.9 286.9 675.3 292.2 674.7 291.7 665.4 286.3z" fill="#2178cc" stroke="#2178cc" stroke-width="0.5" stroke-linejoin="round"/><path d="M665.4 286.3 674.7 291.7 674.1 291.3 664.7 285.9z" fill="#1e70c0" stroke="#1e70c0" stroke-width="0.5" stroke-linejoin="round"/><path d="M664.7 285.9 674.1 291.3 673.3 291.1 663.9 285.7z" fill="#1b67b3" stroke="#1b67b3" stroke-width="0.5" stroke-linejoin="round"/><path d="M666.6 317.8 666.6 289.6 666.6 288.6 666.3 287.6 665.9 286.9 665.4 286.3 664.7 285.9 663.9 285.7" fill="none" stroke="#000" stroke-width="0.9" stroke-linejoin="round" stroke-linecap="round"/><path d="M632.6 293.2 642.0 298.5 670.6 282.2 661.2 276.9z" fill="#1f84e4" stroke="#1f84e4" stroke-width="0.5" stroke-linejoin="round"/><path d="M661.2 276.9 670.6 282.2 672.7 281.2 663.3 275.9z" fill="#1f84e4" stroke="#1f84e4" stroke-width="0.5" stroke-linejoin="round"/><path d="M663.3 275.9 672.7 281.2 674.7 280.6 665.4 275.3z" fill="#1e7edb" stroke="#1e7edb" stroke-width="0.5" stroke-linejoin="round"/><path d="M665.4 275.3 674.7 280.6 676.6 280.4 667.3 275.1z" fill="#1c79d2" stroke="#1c79d2" stroke-width="0.5" stroke-linejoin="round"/><path d="M667.3 275.1 676.6 280.4 678.4 280.6 669.1 275.3z" fill="#1b73c9" stroke="#1b73c9" stroke-width="0.5" stroke-linejoin="round"/><path d="M669.1 275.3 678.4 280.6 680.1 281.2 670.7 275.9z" fill="#1a6ec0" stroke="#1a6ec0" stroke-width="0.5" stroke-linejoin="round"/><path d="M670.7 275.9 680.1 281.2 681.4 282.2 672.1 276.9z" fill="#1868b8" stroke="#1868b8" stroke-width="0.5" stroke-linejoin="round"/><path d="M672.1 276.9 681.4 282.2 682.6 283.6 673.3 278.2z" fill="#1763af" stroke="#1763af" stroke-width="0.5" stroke-linejoin="round"/><path d="M673.3 278.2 682.6 283.6 683.5 285.3 674.1 279.9z" fill="#165da6" stroke="#165da6" stroke-width="0.5" stroke-linejoin="round"/><path d="M632.6 293.2 661.2 276.9 663.3 275.9 665.4 275.3 667.3 275.1 669.1 275.3 670.7 275.9 672.1 276.9 673.3 278.2 674.1 279.9" fill="none" stroke="#000" stroke-width="0.9" stroke-linejoin="round" stroke-linecap="round"/><path d="M632.6 293.2 642.0 298.5 628.9 305.7 624.1 303.0z" fill="#1f84e4" stroke="#000" stroke-width="0.9" stroke-linejoin="round"/><path d="M624.1 303.0 628.9 305.7 628.9 310.5 624.1 307.8z" fill="#1e7edc" stroke="#000" stroke-width="0.9" stroke-linejoin="round"/><path d="M642.0 298.5 670.6 282.2 672.7 281.2 674.8 280.6 676.8 280.4 678.6 280.7 680.3 281.3 681.7 282.4 682.8 283.9 683.6 285.7 684.1 287.8 684.3 290.2 684.3 318.4 676.0 323.1 676.0 294.9 675.9 294.0 675.7 293.2 675.4 292.4 674.9 291.9 674.4 291.4 673.8 291.2 673.0 291.1 672.3 291.1 671.4 291.4 670.6 291.8 642.0 308.1z" fill="#1862b2" stroke="#000" stroke-width="0.9" stroke-linejoin="round"/><path d="M642.0 298.5 628.9 305.7 628.9 310.5 642.0 308.1z" fill="#135294" stroke="#000" stroke-width="0.9" stroke-linejoin="round"/><path d="M676.0 323.1 684.3 318.4 684.3 290.2 676.0 294.9z" fill="#135294"/><path d="M684.3 318.4 684.3 290.2" fill="none" stroke="#000" stroke-width="0.9" stroke-linejoin="round" stroke-linecap="round"/><path d="M676.0 323.1 676.0 294.9" fill="none" stroke="#000" stroke-width="0.9" stroke-linejoin="round" stroke-linecap="round"/><path d="M632.6 293.2 642.0 298.5 642.0 308.1" fill="none" stroke="#000" stroke-width="0.9" stroke-linejoin="round" stroke-linecap="round"/><path d="M661.2 276.9 670.6 282.2 670.6 291.8" fill="none" stroke="#000" stroke-width="0.9" stroke-linejoin="round" stroke-linecap="round"/><path d="M640.1 297.4 668.7 281.2" fill="none" stroke="#000" stroke-width="0.6" stroke-linejoin="round" stroke-linecap="round"/><path d="M707.3 382.5 724.7 376.9 743.8 383.5 726.4 393.4z" fill="#2b92f2" stroke="#000" stroke-width="0.9" stroke-linejoin="round"/><path d="M684.3 331.0 707.3 344.2 724.7 334.3 701.7 321.1z" fill="#1f84e4" stroke="#000" stroke-width="0.9" stroke-linejoin="round"/><path d="M696.7 328.7 706.3 334.2 715.4 329.0 705.9 323.5z" fill="#2b92f2" stroke="#000" stroke-width="0.9" stroke-linejoin="round"/><path d="M684.3 369.3 707.3 382.5 707.3 344.2 684.3 331.0z" fill="#1e7edc" stroke="#000" stroke-width="0.9" stroke-linejoin="round"/><path d="M707.3 382.5 724.7 376.9 724.7 334.3 707.3 344.2z" fill="#135294" stroke="#000" stroke-width="0.9" stroke-linejoin="round"/><path d="M708.1 341.5 717.5 346.9 717.5 318.7 708.1 313.3z" fill="#2389ea" stroke="#000" stroke-width="0.9" stroke-linejoin="round"/><path d="M708.1 313.3 717.5 318.7 717.4 317.6 708.1 312.3z" fill="#2b92f2" stroke="#2b92f2" stroke-width="0.5" stroke-linejoin="round"/><path d="M708.1 312.3 717.4 317.6 717.2 316.7 707.8 311.4z" fill="#2889e5" stroke="#2889e5" stroke-width="0.5" stroke-linejoin="round"/><path d="M707.8 311.4 717.2 316.7 716.8 316.0 707.4 310.6z" fill="#2581d9" stroke="#2581d9" stroke-width="0.5" stroke-linejoin="round"/><path d="M707.4 310.6 716.8 316.0 716.2 315.4 706.9 310.1z" fill="#2178cc" stroke="#2178cc" stroke-width="0.5" stroke-linejoin="round"/><path d="M706.9 310.1 716.2 315.4 715.6 315.0 706.2 309.7z" fill="#1e70c0" stroke="#1e70c0" stroke-width="0.5" stroke-linejoin="round"/><path d="M706.2 309.7 715.6 315.0 714.8 314.8 705.4 309.5z" fill="#1b67b3" stroke="#1b67b3" stroke-width="0.5" stroke-linejoin="round"/><path d="M708.1 341.5 708.1 313.3 708.1 312.3 707.8 311.4 707.4 310.6 706.9 310.1 706.2 309.7 705.4 309.5" fill="none" stroke="#000" stroke-width="0.9" stroke-linejoin="round" stroke-linecap="round"/><path d="M674.1 316.9 683.5 322.3 712.1 306.0 702.7 300.6z" fill="#1f84e4" stroke="#1f84e4" stroke-width="0.5" stroke-linejoin="round"/><path d="M702.7 300.6 712.1 306.0 714.2 305.0 704.8 299.6z" fill="#1f84e4" stroke="#1f84e4" stroke-width="0.5" stroke-linejoin="round"/><path d="M704.8 299.6 714.2 305.0 716.2 304.4 706.9 299.0z" fill="#1e7edb" stroke="#1e7edb" stroke-width="0.5" stroke-linejoin="round"/><path d="M706.9 299.0 716.2 304.4 718.1 304.2 708.8 298.8z" fill="#1c79d2" stroke="#1c79d2" stroke-width="0.5" stroke-linejoin="round"/><path d="M708.8 298.8 718.1 304.2 719.9 304.4 710.6 299.0z" fill="#1b73c9" stroke="#1b73c9" stroke-width="0.5" stroke-linejoin="round"/><path d="M710.6 299.0 719.9 304.4 721.6 305.0 712.2 299.6z" fill="#1a6ec0" stroke="#1a6ec0" stroke-width="0.5" stroke-linejoin="round"/><path d="M712.2 299.6 721.6 305.0 722.9 306.0 713.6 300.6z" fill="#1868b8" stroke="#1868b8" stroke-width="0.5" stroke-linejoin="round"/><path d="M713.6 300.6 722.9 306.0 724.1 307.3 714.8 302.0z" fill="#1763af" stroke="#1763af" stroke-width="0.5" stroke-linejoin="round"/><path d="M714.8 302.0 724.1 307.3 725.0 309.0 715.6 303.7z" fill="#165da6" stroke="#165da6" stroke-width="0.5" stroke-linejoin="round"/><path d="M674.1 316.9 702.7 300.6 704.8 299.6 706.9 299.0 708.8 298.8 710.6 299.0 712.2 299.6 713.6 300.6 714.8 302.0 715.6 303.7" fill="none" stroke="#000" stroke-width="0.9" stroke-linejoin="round" stroke-linecap="round"/><path d="M674.1 316.9 683.5 322.3 670.4 329.5 665.6 326.7z" fill="#1f84e4" stroke="#000" stroke-width="0.9" stroke-linejoin="round"/><path d="M665.6 326.7 670.4 329.5 670.4 334.3 665.6 331.5z" fill="#1e7edc" stroke="#000" stroke-width="0.9" stroke-linejoin="round"/><path d="M683.5 322.3 712.1 306.0 714.2 304.9 716.3 304.3 718.3 304.2 720.1 304.4 721.8 305.1 723.2 306.2 724.3 307.6 725.1 309.5 725.6 311.6 725.8 314.0 725.8 342.2 717.5 346.9 717.5 318.7 717.4 317.7 717.2 316.9 716.9 316.2 716.4 315.6 715.9 315.2 715.3 314.9 714.5 314.8 713.8 314.9 712.9 315.1 712.1 315.5 683.5 331.8z" fill="#1862b2" stroke="#000" stroke-width="0.9" stroke-linejoin="round"/><path d="M683.5 322.3 670.4 329.5 670.4 334.3 683.5 331.8z" fill="#135294" stroke="#000" stroke-width="0.9" stroke-linejoin="round"/><path d="M717.5 346.9 725.8 342.2 725.8 314.0 717.5 318.7z" fill="#135294"/><path d="M725.8 342.2 725.8 314.0" fill="none" stroke="#000" stroke-width="0.9" stroke-linejoin="round" stroke-linecap="round"/><path d="M717.5 346.9 717.5 318.7" fill="none" stroke="#000" stroke-width="0.9" stroke-linejoin="round" stroke-linecap="round"/><path d="M674.1 316.9 683.5 322.3 683.5 331.8" fill="none" stroke="#000" stroke-width="0.9" stroke-linejoin="round" stroke-linecap="round"/><path d="M702.7 300.6 712.1 306.0 712.1 315.5" fill="none" stroke="#000" stroke-width="0.9" stroke-linejoin="round" stroke-linecap="round"/><path d="M681.6 321.2 710.2 304.9" fill="none" stroke="#000" stroke-width="0.6" stroke-linejoin="round" stroke-linecap="round"/><path d="M748.8 406.2 766.2 400.6 785.3 407.2 767.9 417.1z" fill="#2b92f2" stroke="#000" stroke-width="0.9" stroke-linejoin="round"/><path d="M725.8 354.8 748.8 368.0 766.2 358.1 743.2 344.9z" fill="#1f84e4" stroke="#000" stroke-width="0.9" stroke-linejoin="round"/><path d="M738.2 352.5 747.8 357.9 756.9 352.7 747.4 347.3z" fill="#2b92f2" stroke="#000" stroke-width="0.9" stroke-linejoin="round"/><path d="M725.8 393.0 748.8 406.2 748.8 368.0 725.8 354.8z" fill="#1e7edc" stroke="#000" stroke-width="0.9" stroke-linejoin="round"/><path d="M748.8 406.2 766.2 400.6 766.2 358.1 748.8 368.0z" fill="#135294" stroke="#000" stroke-width="0.9" stroke-linejoin="round"/><path d="M749.6 365.3 759.0 370.6 759.0 342.4 749.6 337.1z" fill="#2389ea" stroke="#000" stroke-width="0.9" stroke-linejoin="round"/><path d="M749.6 337.1 759.0 342.4 758.9 341.4 749.6 336.1z" fill="#2b92f2" stroke="#2b92f2" stroke-width="0.5" stroke-linejoin="round"/><path d="M749.6 336.1 758.9 341.4 758.7 340.5 749.3 335.1z" fill="#2889e5" stroke="#2889e5" stroke-width="0.5" stroke-linejoin="round"/><path d="M749.3 335.1 758.7 340.5 758.3 339.7 748.9 334.4z" fill="#2581d9" stroke="#2581d9" stroke-width="0.5" stroke-linejoin="round"/><path d="M748.9 334.4 758.3 339.7 757.7 339.2 748.4 333.8z" fill="#2178cc" stroke="#2178cc" stroke-width="0.5" stroke-linejoin="round"/><path d="M748.4 333.8 757.7 339.2 757.1 338.8 747.7 333.4z" fill="#1e70c0" stroke="#1e70c0" stroke-width="0.5" stroke-linejoin="round"/><path d="M747.7 333.4 757.1 338.8 756.3 338.6 746.9 333.2z" fill="#1b67b3" stroke="#1b67b3" stroke-width="0.5" stroke-linejoin="round"/><path d="M749.6 365.3 749.6 337.1 749.6 336.1 749.3 335.1 748.9 334.4 748.4 333.8 747.7 333.4 746.9 333.2" fill="none" stroke="#000" stroke-width="0.9" stroke-linejoin="round" stroke-linecap="round"/><path d="M715.6 340.7 725.0 346.0 753.6 329.7 744.2 324.4z" fill="#1f84e4" stroke="#1f84e4" stroke-width="0.5" stroke-linejoin="round"/><path d="M744.2 324.4 753.6 329.7 755.7 328.7 746.3 323.4z" fill="#1f84e4" stroke="#1f84e4" stroke-width="0.5" stroke-linejoin="round"/><path d="M746.3 323.4 755.7 328.7 757.7 328.1 748.4 322.8z" fill="#1e7edb" stroke="#1e7edb" stroke-width="0.5" stroke-linejoin="round"/><path d="M748.4 322.8 757.7 328.1 759.6 327.9 750.3 322.6z" fill="#1c79d2" stroke="#1c79d2" stroke-width="0.5" stroke-linejoin="round"/><path d="M750.3 322.6 759.6 327.9 761.4 328.1 752.1 322.8z" fill="#1b73c9" stroke="#1b73c9" stroke-width="0.5" stroke-linejoin="round"/><path d="M752.1 322.8 761.4 328.1 763.1 328.7 753.7 323.4z" fill="#1a6ec0" stroke="#1a6ec0" stroke-width="0.5" stroke-linejoin="round"/><path d="M753.7 323.4 763.1 328.7 764.4 329.7 755.1 324.4z" fill="#1868b8" stroke="#1868b8" stroke-width="0.5" stroke-linejoin="round"/><path d="M755.1 324.4 764.4 329.7 765.6 331.1 756.3 325.7z" fill="#1763af" stroke="#1763af" stroke-width="0.5" stroke-linejoin="round"/><path d="M756.3 325.7 765.6 331.1 766.5 332.8 757.1 327.4z" fill="#165da6" stroke="#165da6" stroke-width="0.5" stroke-linejoin="round"/><path d="M715.6 340.7 744.2 324.4 746.3 323.4 748.4 322.8 750.3 322.6 752.1 322.8 753.7 323.4 755.1 324.4 756.3 325.7 757.1 327.4" fill="none" stroke="#000" stroke-width="0.9" stroke-linejoin="round" stroke-linecap="round"/><path d="M715.6 340.7 725.0 346.0 711.9 353.2 707.1 350.5z" fill="#1f84e4" stroke="#000" stroke-width="0.9" stroke-linejoin="round"/><path d="M707.1 350.5 711.9 353.2 711.9 358.0 707.1 355.3z" fill="#1e7edc" stroke="#000" stroke-width="0.9" stroke-linejoin="round"/><path d="M725.0 346.0 753.6 329.7 755.7 328.7 757.8 328.1 759.8 327.9 761.6 328.2 763.3 328.8 764.7 329.9 765.8 331.4 766.6 333.2 767.1 335.3 767.3 337.7 767.3 365.9 759.0 370.6 759.0 342.4 758.9 341.5 758.7 340.7 758.4 339.9 757.9 339.4 757.4 338.9 756.8 338.7 756.0 338.6 755.3 338.6 754.4 338.9 753.6 339.3 725.0 355.6z" fill="#1862b2" stroke="#000" stroke-width="0.9" stroke-linejoin="round"/><path d="M725.0 346.0 711.9 353.2 711.9 358.0 725.0 355.6z" fill="#135294" stroke="#000" stroke-width="0.9" stroke-linejoin="round"/><path d="M759.0 370.6 767.3 365.9 767.3 337.7 759.0 342.4z" fill="#135294"/><path d="M767.3 365.9 767.3 337.7" fill="none" stroke="#000" stroke-width="0.9" stroke-linejoin="round" stroke-linecap="round"/><path d="M759.0 370.6 759.0 342.4" fill="none" stroke="#000" stroke-width="0.9" stroke-linejoin="round" stroke-linecap="round"/><path d="M715.6 340.7 725.0 346.0 725.0 355.6" fill="none" stroke="#000" stroke-width="0.9" stroke-linejoin="round" stroke-linecap="round"/><path d="M744.2 324.4 753.6 329.7 753.6 339.3" fill="none" stroke="#000" stroke-width="0.9" stroke-linejoin="round" stroke-linecap="round"/><path d="M723.1 344.9 751.7 328.7" fill="none" stroke="#000" stroke-width="0.6" stroke-linejoin="round" stroke-linecap="round"/><path d="M767.3 378.5 790.3 391.7 807.7 381.8 784.7 368.6z" fill="#1f84e4" stroke="#000" stroke-width="0.9" stroke-linejoin="round"/><path d="M779.7 376.2 789.3 381.7 798.4 376.5 788.9 371.0z" fill="#2b92f2" stroke="#000" stroke-width="0.9" stroke-linejoin="round"/><path d="M767.3 416.8 790.3 430.0 790.3 391.7 767.3 378.5z" fill="#1e7edc" stroke="#000" stroke-width="0.9" stroke-linejoin="round"/><path d="M789.5 394.6 802.8 389.9 803.8 394.6 816.8 391.9 816.8 420.3 789.5 427.4z" fill="#135294" stroke="#000" stroke-width="0.9" stroke-linejoin="round"/><path d="M816.8 391.9 818.8 391.9 818.8 421.3 816.8 420.3z" fill="#1e7edc" stroke="#000" stroke-width="0.9" stroke-linejoin="round"/><path d="M791.1 389.0 800.5 394.4 800.5 366.2 791.1 360.8z" fill="#2389ea" stroke="#000" stroke-width="0.9" stroke-linejoin="round"/><path d="M791.1 360.8 800.5 366.2 800.4 365.1 791.1 359.8z" fill="#2b92f2" stroke="#2b92f2" stroke-width="0.5" stroke-linejoin="round"/><path d="M791.1 359.8 800.4 365.1 800.2 364.2 790.8 358.9z" fill="#2889e5" stroke="#2889e5" stroke-width="0.5" stroke-linejoin="round"/><path d="M790.8 358.9 800.2 364.2 799.8 363.5 790.4 358.1z" fill="#2581d9" stroke="#2581d9" stroke-width="0.5" stroke-linejoin="round"/><path d="M790.4 358.1 799.8 363.5 799.2 362.9 789.9 357.6z" fill="#2178cc" stroke="#2178cc" stroke-width="0.5" stroke-linejoin="round"/><path d="M789.9 357.6 799.2 362.9 798.6 362.5 789.2 357.2z" fill="#1e70c0" stroke="#1e70c0" stroke-width="0.5" stroke-linejoin="round"/><path d="M789.2 357.2 798.6 362.5 797.8 362.3 788.4 357.0z" fill="#1b67b3" stroke="#1b67b3" stroke-width="0.5" stroke-linejoin="round"/><path d="M791.1 389.0 791.1 360.8 791.1 359.8 790.8 358.9 790.4 358.1 789.9 357.6 789.2 357.2 788.4 357.0" fill="none" stroke="#000" stroke-width="0.9" stroke-linejoin="round" stroke-linecap="round"/><path d="M757.1 364.4 766.5 369.8 795.1 353.5 785.7 348.1z" fill="#1f84e4" stroke="#1f84e4" stroke-width="0.5" stroke-linejoin="round"/><path d="M785.7 348.1 795.1 353.5 797.2 352.5 787.8 347.1z" fill="#1f84e4" stroke="#1f84e4" stroke-width="0.5" stroke-linejoin="round"/><path d="M787.8 347.1 797.2 352.5 799.2 351.9 789.9 346.5z" fill="#1e7edb" stroke="#1e7edb" stroke-width="0.5" stroke-linejoin="round"/><path d="M789.9 346.5 799.2 351.9 801.1 351.7 791.8 346.3z" fill="#1c79d2" stroke="#1c79d2" stroke-width="0.5" stroke-linejoin="round"/><path d="M791.8 346.3 801.1 351.7 802.9 351.9 793.6 346.5z" fill="#1b73c9" stroke="#1b73c9" stroke-width="0.5" stroke-linejoin="round"/><path d="M793.6 346.5 802.9 351.9 804.6 352.5 795.2 347.1z" fill="#1a6ec0" stroke="#1a6ec0" stroke-width="0.5" stroke-linejoin="round"/><path d="M795.2 347.1 804.6 352.5 805.9 353.5 796.6 348.1z" fill="#1868b8" stroke="#1868b8" stroke-width="0.5" stroke-linejoin="round"/><path d="M796.6 348.1 805.9 353.5 807.1 354.8 797.8 349.5z" fill="#1763af" stroke="#1763af" stroke-width="0.5" stroke-linejoin="round"/><path d="M797.8 349.5 807.1 354.8 808.0 356.5 798.6 351.2z" fill="#165da6" stroke="#165da6" stroke-width="0.5" stroke-linejoin="round"/><path d="M757.1 364.4 785.7 348.1 787.8 347.1 789.9 346.5 791.8 346.3 793.6 346.5 795.2 347.1 796.6 348.1 797.8 349.5 798.6 351.2" fill="none" stroke="#000" stroke-width="0.9" stroke-linejoin="round" stroke-linecap="round"/><path d="M757.1 364.4 766.5 369.8 753.4 377.0 748.6 374.2z" fill="#1f84e4" stroke="#000" stroke-width="0.9" stroke-linejoin="round"/><path d="M748.6 374.2 753.4 377.0 753.4 381.8 748.6 379.0z" fill="#1e7edc" stroke="#000" stroke-width="0.9" stroke-linejoin="round"/><path d="M766.5 369.8 795.1 353.5 797.2 352.4 799.3 351.8 801.3 351.7 803.1 351.9 804.8 352.6 806.2 353.7 807.3 355.1 808.1 357.0 808.6 359.1 808.8 361.5 808.8 389.7 800.5 394.4 800.5 366.2 800.4 365.2 800.2 364.4 799.9 363.7 799.4 363.1 798.9 362.7 798.3 362.4 797.5 362.3 796.8 362.4 795.9 362.6 795.1 363.0 766.5 379.3z" fill="#1862b2" stroke="#000" stroke-width="0.9" stroke-linejoin="round"/><path d="M766.5 369.8 753.4 377.0 753.4 381.8 766.5 379.3z" fill="#135294" stroke="#000" stroke-width="0.9" stroke-linejoin="round"/><path d="M800.5 394.4 808.8 389.7 808.8 361.5 800.5 366.2z" fill="#135294"/><path d="M808.8 389.7 808.8 361.5" fill="none" stroke="#000" stroke-width="0.9" stroke-linejoin="round" stroke-linecap="round"/><path d="M800.5 394.4 800.5 366.2" fill="none" stroke="#000" stroke-width="0.9" stroke-linejoin="round" stroke-linecap="round"/><path d="M757.1 364.4 766.5 369.8 766.5 379.3" fill="none" stroke="#000" stroke-width="0.9" stroke-linejoin="round" stroke-linecap="round"/><path d="M785.7 348.1 795.1 353.5 795.1 363.0" fill="none" stroke="#000" stroke-width="0.9" stroke-linejoin="round" stroke-linecap="round"/><path d="M764.6 368.7 793.2 352.4" fill="none" stroke="#000" stroke-width="0.6" stroke-linejoin="round" stroke-linecap="round"/></svg>

<!-- status strip + message area -->
<div style="left:228px;top:591px;width:952px;height:37px;background:linear-gradient(#fefefe,#f4f4f4 45%,#ececec)"></div>
<svg style="left:1070px;top:594px" width="110" height="28" viewBox="0 0 110 28"><g fill="none" stroke="#18a8a0" stroke-width="1.400" stroke-linecap="round" stroke-linejoin="round"><path d="M11 4.500C14 2.500 17.500 4 15.500 7 14.500 8.500 12 9.500 11.500 11 14 10.500 16.500 11.500 16 14.500 15.500 17 12.500 18 9 17"/><path d="M25 11.500C21 10.500 18.500 12 19 14 19.500 16 24 16.500 23 19 22 21 18.500 20.500 17 20"/><path d="M9.500 14C6 17 4 21 2.500 24.500 7 22 11 20 12.500 17"/></g><text x="30" y="22" font-family="Liberation Sans,sans-serif" font-style="italic" font-weight="bold" font-size="13" fill="#18a8a0" textLength="77" lengthAdjust="spacingAndGlyphs" letter-spacing="1">SIMULIA</text></svg>
<div style="left:10px;top:628px;width:38px;height:38px;background:#fff;border:1px solid #b0b0b0;border-right:none"></div>
<svg style="left:17px;top:635px" width="23" height="24" viewBox="0 0 23 24"><defs><linearGradient id="nb" x1="0" y1="0" x2="1" y2="1"><stop offset="0" stop-color="#f6f6ee"/><stop offset=".6" stop-color="#dcdccc"/><stop offset="1" stop-color="#bcbcaa"/></linearGradient></defs><rect x="3.500" y="2.500" width="17.500" height="18.500" fill="url(#nb)" stroke="#444" stroke-width=".9"/><path d="M9 17.500 12 20.500 14 19.500 13 16z" fill="#55554a" opacity=".55"/><path d="M11.300 13.300 8.800 12.700 1.500 20 4 22.500 11.300 15.200z" fill="#f0b020" stroke="#7a5a10" stroke-width=".7"/><path d="M3 18.500 5.500 21M4.500 17 7 19.500" stroke="#fff2a0" stroke-width=".8"/><path d="M11.800 12.700 8.800 12.700 11.300 15.200z" fill="#222"/></svg>
<div style="left:12px;top:667px;width:35px;height:35px;background:linear-gradient(#ececec,#dcdcdc);border:1px solid #bcbcbc;box-shadow:inset 0 0 0 1px #f4f4f4"></div>
<div style="left:18px;top:672px;width:24px;height:24px;background:linear-gradient(135deg,#f8e88c,#f0d870 50%,#ecd060);border:1.300px solid #111"></div>
<span class="t" style="left:22px;top:677px;font-size:12px;font-weight:bold;letter-spacing:-1.3px;line-height:14px">&gt;&gt;&gt;</span>
<div style="left:1162px;top:628px;width:18px;height:144px;background:#f0f0f0"></div>
<div id="msg" style="left:46px;top:628px;width:1116px;height:141px;background:#fff;border:1px solid #828790;border-top-color:#6a6a6a;border-left-color:#6a6a6a;box-shadow:inset 1px 1px 0 #c0c0c0"></div>
<div class="t" style="left:54px;top:689px;font-family:'Liberation Mono','Noto Serif CJK SC',monospace;font-size:13.330px;line-height:13px;white-space:pre">The model "Model-7" has been created.
The model "Model-8" has been created.
The model "Model-9" has been created.
<span style="position:static;font-size:13px;letter-spacing:3px;font-weight:600">项目信息设置成功</span>!
<span style="position:static;font-size:13px;letter-spacing:3px;font-weight:600">分析步设置成功</span>!
['Initial', 'Step-1', 'Step-2']</div>
<!-- scrollbar -->
<div style="left:1145px;top:630px;width:16px;height:138px;background:#f0f0f0"></div>
<svg style="left:1150px;top:637px" width="7" height="4" viewBox="0 0 7 4"><path d="M0 4 3.500 0 7 4z" fill="#444"/></svg>
<svg style="left:1150px;top:757px" width="7" height="4" viewBox="0 0 7 4"><path d="M0 0 3.500 4 7 0z" fill="#444"/></svg>
<div style="left:1146px;top:655px;width:14px;height:95px;border:1px solid #8a8a8a;border-radius:2px;background:linear-gradient(90deg,#f4f4f4,#dcdcdc 45%,#c4c4c4)"></div>
<div style="left:1149px;top:698px;width:8px;height:7px;background:repeating-linear-gradient(#555 0 1px,transparent 1px 2px)"></div>
<svg style="left:1165px;top:758px" width="14" height="14" viewBox="0 0 14 14"><g fill="#a8a8a8"><rect x="10" y="10" width="2" height="2"/><rect x="6" y="10" width="2" height="2"/><rect x="2" y="10" width="2" height="2"/><rect x="10" y="6" width="2" height="2"/><rect x="6" y="6" width="2" height="2"/><rect x="10" y="2" width="2" height="2"/></g></svg>

<!-- dialog 1: 3D模型导入 (inactive) -->
<div style="left:126px;top:221px;width:318px;height:126px;border:1px solid #7c7c7c;border-radius:7px;background:linear-gradient(90deg,#fdfeff 0%,#fdfeff 28%,#e0f6fc 31.500%,#f1fbfe 35%,#f1fbfe 50%,#e0f6fc 53%,#fdfeff 57%);box-shadow:inset 0 0 0 1px #fff"></div>
<svg style="left:133.5px;top:228px" width="15" height="16" viewBox="0 0 15 16"><path d="M5 0h4.600v2.200l5 4.300v.6H0v-.6l5-4.300z" fill="url(#tg)"/><rect x="0" y="7.100" width="14.600" height="1.500" fill="#fff"/><path d="M5 15.700h4.600v-2.200l5-4.300v-.6H0v.6l5 4.300z" fill="url(#tg)"/></svg>
<span class="t" style="left:155px;top:230px;font-size:12.500px">3D<span style="position:static;font-size:12px">模型导入</span></span>
<div style="left:390px;top:221px;width:47px;height:20px;border:1px solid #8a8a8a;border-top:none;border-radius:0 0 5px 5px;background:#fff"></div>
<svg style="left:407px;top:226px" width="13" height="10" viewBox="0 0 13 10"><path d="M1 .8h3L6.500 3.200 9 .8h3L8.300 5 12 9.200H9L6.500 6.800 4 9.200H1L4.700 5z" fill="#fff" stroke="#555" stroke-width="1"/></svg>
<div style="left:133px;top:250px;width:304px;height:90px;background:linear-gradient(90deg,#fefefe 0%,#f8f8f8 15%,#f0f0f0 42%);border:1px solid #9a9a9a"></div>
<div style="left:138px;top:256px;width:294px;height:43px;border:1px solid #d0d8e0;border-radius:4px;background:transparent;box-shadow:inset 0 0 0 1px rgba(255,255,255,.7)"></div>
<span class="t cj" style="left:150px;top:272px">文件路径</span>
<div class="inp" style="left:202px;top:265px;width:183px;height:25px"></div>
<div class="btn" style="left:390px;top:266px;width:31px;height:23px"></div>
<span class="t" style="left:390px;top:270px;width:31px;text-align:center;font-size:12px;font-weight:bold;letter-spacing:0px">...</span>
<div style="left:138px;top:304px;width:294px;height:1px;background:#9c9c9c"></div>
<div style="left:138px;top:305px;width:294px;height:1px;background:#fff"></div>
<div class="btn" style="left:164px;top:311px;width:42px;height:23px"></div><span class="t cj" style="left:164px;top:316px;width:42px;text-align:center">确认</span>
<div class="btn" style="left:263px;top:311px;width:42px;height:23px"></div><span class="t cj" style="left:263px;top:316px;width:42px;text-align:center">应用</span>
<div class="btn" style="left:363px;top:311px;width:42px;height:23px"></div><span class="t cj" style="left:363px;top:316px;width:42px;text-align:center">退出</span>

<!-- dialog 2: Select files (active) -->
<div style="left:48px;top:358px;width:515px;height:338px;border:1px solid #2e3c4c;border-radius:7px;background:linear-gradient(90deg,#a9d2f6 0%,#b9dbf8 20%,#c2e0fa 40%,#a6d1f8 60%,#a2cef7 100%);box-shadow:inset 0 0 0 1px #e4f2fd"></div>
<div style="left:50px;top:360px;width:511px;height:27px;border-radius:6px 6px 0 0;background:linear-gradient(rgba(255,255,255,.45),rgba(255,255,255,.1) 50%,rgba(255,255,255,0))"></div>
<div style="left:50px;top:360px;width:140px;height:27px;background:radial-gradient(68px 22px at 62px 13px,rgba(255,255,255,.75) 0%,rgba(255,255,255,.5) 50%,rgba(255,255,255,0) 100%)"></div>
<svg style="left:54.5px;top:365px" width="15" height="16" viewBox="0 0 15 16"><path d="M5 0h4.600v2.200l5 4.300v.6H0v-.6l5-4.300z" fill="url(#tg)"/><rect x="0" y="7.100" width="14.600" height="1.500" fill="#fff"/><path d="M5 15.700h4.600v-2.200l5-4.300v-.6H0v.6l5 4.300z" fill="url(#tg)"/></svg>
<span class="t" style="left:76px;top:366px">Select files</span>
<div style="left:300px;top:360px;width:261px;height:27px;border-radius:0 6px 0 0;background:linear-gradient(90deg,rgba(255,255,255,0),rgba(255,255,255,.42) 60%,rgba(255,255,255,.5))"></div>
<div style="left:509px;top:359px;width:47px;height:19px;border:1px solid #4a2020;border-top:none;border-radius:0 0 5px 5px;background:linear-gradient(#f0b4a8 0%,#e08c7c 45%,#c8402c 50%,#d4604a 80%,#e08868 100%);box-shadow:inset 0 0 0 1px rgba(255,255,255,.45)"></div>
<svg style="left:526px;top:362px" width="13" height="11" viewBox="0 0 13 11"><path d="M1 .8h3.200L6.500 3.400 8.800.8H12L8.300 5.500 12 10.200H8.800L6.500 7.600 4.200 10.200H1L4.700 5.500z" fill="#fff" stroke="#5a2a2a" stroke-width=".9"/></svg>
<div style="left:54px;top:387px;width:503px;height:302px;background:linear-gradient(90deg,#fefefe 0%,#f9f9f9 15%,#f0f0f0 42%);border:1px solid #6e8094"></div>
<span class="t" style="left:65px;top:402px">Directory:</span>
<div style="left:123px;top:396px;width:160px;height:25px;background:#fff;border:1px solid #a2a2a2;border-top-color:#8e8e8e;border-left-color:#8e8e8e;box-shadow:inset 1px 1px 0 #dcdcdc"></div>
<div style="left:270px;top:398px;width:11px;height:21px;background:linear-gradient(90deg,#fff,#d8d8d8);border:1px solid #888"></div>
<svg style="left:272px;top:406px" width="8" height="5" viewBox="0 0 8 5"><path d="M0 0H8L4 5z" fill="#000"/></svg>
<span class="t" style="left:147px;top:402px">results</span>
<div class="inp" style="left:59px;top:429px;width:492px;height:189px;border-color:#828790"></div>

<svg width="0" height="0" style="left:0;top:0"><defs><pattern id="fp" width="2" height="2" patternUnits="userSpaceOnUse"><rect width="2" height="2" fill="#ffff20"/><rect width="1" height="1" fill="#f4f0c0"/><rect x="1" y="1" width="1" height="1" fill="#f4f0c0"/></pattern><pattern id="sp" width="2" height="2" patternUnits="userSpaceOnUse"><rect width="2" height="2" fill="#fff"/><rect width="1" height="1" fill="#3399ff"/><rect x="1" y="1" width="1" height="1" fill="#3399ff"/></pattern></defs></svg>
<svg style="left:127px;top:401px" width="16" height="14" viewBox="0 0 16 14"><path d="M1 3Q1 1 3 1H6Q7.500 1 8 3H14V12H1z" fill="url(#fp)"/><path d="M.5 12.500V3Q.5 .5 3 .5H6Q8 .5 8.500 2.500H14" fill="none" stroke="#8a8a8a" stroke-width="1"/><path d="M1.500 12V3.500Q1.500 1.500 3.500 1.500H6" fill="none" stroke="#fff" stroke-width="1"/><path d="M14.300 2.500V12.300H.8" fill="none" stroke="#000" stroke-width="1.500"/></svg>
<svg style="left:63px;top:434px" width="16" height="14" viewBox="0 0 16 14"><path d="M1 3Q1 1 3 1H6Q7.500 1 8 3H14V12H1z" fill="url(#fp)"/><path d="M.5 12.500V3Q.5 .5 3 .5H6Q8 .5 8.500 2.500H14" fill="none" stroke="#8a8a8a" stroke-width="1"/><path d="M1.500 12V3.500Q1.500 1.500 3.500 1.500H6" fill="none" stroke="#fff" stroke-width="1"/><path d="M14.300 2.500V12.300H.8" fill="none" stroke="#000" stroke-width="1.500"/></svg>
<span class="t" style="left:83px;top:435px">..</span>
<svg style="left:63px;top:455px" width="16" height="14" viewBox="0 0 16 14"><path d="M1 3Q1 1 3 1H6Q7.500 1 8 3H14V12H1z" fill="url(#fp)"/><path d="M.5 12.500V3Q.5 .5 3 .5H6Q8 .5 8.500 2.500H14" fill="none" stroke="#8a8a8a" stroke-width="1"/><path d="M1.500 12V3.500Q1.500 1.500 3.500 1.500H6" fill="none" stroke="#fff" stroke-width="1"/><path d="M14.300 2.500V12.300H.8" fill="none" stroke="#000" stroke-width="1.500"/></svg>
<span class="t" style="left:83px;top:456px">chaba</span>
<svg style="left:63px;top:476px" width="16" height="14" viewBox="0 0 16 14"><path d="M1 3Q1 1 3 1H6Q7.500 1 8 3H14V12H1z" fill="url(#fp)"/><path d="M.5 12.500V3Q.5 .5 3 .5H6Q8 .5 8.500 2.500H14" fill="none" stroke="#8a8a8a" stroke-width="1"/><path d="M1.500 12V3.500Q1.500 1.500 3.500 1.500H6" fill="none" stroke="#fff" stroke-width="1"/><path d="M14.300 2.500V12.300H.8" fill="none" stroke="#000" stroke-width="1.500"/></svg>
<span class="t" style="left:83px;top:477px">chaba_2</span>
<svg style="left:63px;top:497px" width="16" height="14" viewBox="0 0 16 14"><path d="M1 3Q1 1 3 1H6Q7.500 1 8 3H14V12H1z" fill="url(#fp)"/><path d="M.5 12.500V3Q.5 .5 3 .5H6Q8 .5 8.500 2.500H14" fill="none" stroke="#8a8a8a" stroke-width="1"/><path d="M1.500 12V3.500Q1.500 1.500 3.500 1.500H6" fill="none" stroke="#fff" stroke-width="1"/><path d="M14.300 2.500V12.300H.8" fill="none" stroke="#000" stroke-width="1.500"/></svg>
<span class="t" style="left:83px;top:498px">chaba_3</span>
<svg style="left:63px;top:518px" width="16" height="14" viewBox="0 0 16 14"><path d="M1 3Q1 1 3 1H6Q7.500 1 8 3H14V12H1z" fill="url(#fp)"/><path d="M.5 12.500V3Q.5 .5 3 .5H6Q8 .5 8.500 2.500H14" fill="none" stroke="#8a8a8a" stroke-width="1"/><path d="M1.500 12V3.500Q1.500 1.500 3.500 1.500H6" fill="none" stroke="#fff" stroke-width="1"/><path d="M14.300 2.500V12.300H.8" fill="none" stroke="#000" stroke-width="1.500"/></svg>
<span class="t" style="left:83px;top:519px">chongji</span>
<svg style="left:63px;top:539px" width="16" height="14" viewBox="0 0 16 14"><path d="M1 3Q1 1 3 1H6Q7.500 1 8 3H14V12H1z" fill="url(#fp)"/><path d="M.5 12.500V3Q.5 .5 3 .5H6Q8 .5 8.500 2.500H14" fill="none" stroke="#8a8a8a" stroke-width="1"/><path d="M1.500 12V3.500Q1.500 1.500 3.500 1.500H6" fill="none" stroke="#fff" stroke-width="1"/><path d="M14.300 2.500V12.300H.8" fill="none" stroke="#000" stroke-width="1.500"/></svg>
<span class="t" style="left:83px;top:540px">duanbao</span>
<svg style="left:63px;top:560px" width="16" height="14" viewBox="0 0 16 14"><path d="M1 3Q1 1 3 1H6Q7.500 1 8 3H14V12H1z" fill="url(#fp)"/><path d="M.5 12.500V3Q.5 .5 3 .5H6Q8 .5 8.500 2.500H14" fill="none" stroke="#8a8a8a" stroke-width="1"/><path d="M1.500 12V3.500Q1.500 1.500 3.500 1.500H6" fill="none" stroke="#fff" stroke-width="1"/><path d="M14.300 2.500V12.300H.8" fill="none" stroke="#000" stroke-width="1.500"/></svg>
<span class="t" style="left:83px;top:561px">housing</span>
<svg style="left:63px;top:581px" width="16" height="14" viewBox="0 0 16 14"><path d="M1 3Q1 1 3 1H6Q7.500 1 8 3H14V12H1z" fill="url(#fp)"/><path d="M.5 12.500V3Q.5 .5 3 .5H6Q8 .5 8.500 2.500H14" fill="none" stroke="#8a8a8a" stroke-width="1"/><path d="M1.500 12V3.500Q1.500 1.500 3.500 1.500H6" fill="none" stroke="#fff" stroke-width="1"/><path d="M14.300 2.500V12.300H.8" fill="none" stroke="#000" stroke-width="1.500"/></svg>
<span class="t" style="left:83px;top:582px">wensheng</span>
<svg style="left:205px;top:434px" width="16" height="14" viewBox="0 0 16 14"><path d="M1 3Q1 1 3 1H6Q7.500 1 8 3H14V12H1z" fill="url(#fp)"/><path d="M.5 12.500V3Q.5 .5 3 .5H6Q8 .5 8.500 2.500H14" fill="none" stroke="#8a8a8a" stroke-width="1"/><path d="M1.500 12V3.500Q1.500 1.500 3.500 1.500H6" fill="none" stroke="#fff" stroke-width="1"/><path d="M14.300 2.500V12.300H.8" fill="none" stroke="#000" stroke-width="1.500"/></svg>
<span class="t" style="left:225px;top:435px">xiangai</span>
<svg style="left:205px;top:455px" width="16" height="14" viewBox="0 0 16 14"><path d="M1 3Q1 1 3 1H6Q7.500 1 8 3H14V12H1z" fill="url(#fp)"/><path d="M.5 12.500V3Q.5 .5 3 .5H6Q8 .5 8.500 2.500H14" fill="none" stroke="#8a8a8a" stroke-width="1"/><path d="M1.500 12V3.500Q1.500 1.500 3.500 1.500H6" fill="none" stroke="#fff" stroke-width="1"/><path d="M14.300 2.500V12.300H.8" fill="none" stroke="#000" stroke-width="1.500"/></svg>
<span class="t" style="left:225px;top:456px">zhendong</span>
<svg style="left:205px;top:476px" width="16" height="14" viewBox="0 0 16 14"><path d="M1 3Q1 1 3 1H6Q7.500 1 8 3H14V12H1z" fill="url(#fp)"/><path d="M.5 12.500V3Q.5 .5 3 .5H6Q8 .5 8.500 2.500H14" fill="none" stroke="#8a8a8a" stroke-width="1"/><path d="M1.500 12V3.500Q1.500 1.500 3.500 1.500H6" fill="none" stroke="#fff" stroke-width="1"/><path d="M14.300 2.500V12.300H.8" fill="none" stroke="#000" stroke-width="1.500"/></svg>
<span class="t" style="left:225px;top:477px">zhengxianzhendong</span>
<svg style="left:205px;top:497px" width="16" height="14" viewBox="0 0 16 14"><path d="M1 3Q1 1 3 1H6Q7.500 1 8 3H14V12H1z" fill="url(#fp)"/><path d="M.5 12.500V3Q.5 .5 3 .5H6Q8 .5 8.500 2.500H14" fill="none" stroke="#8a8a8a" stroke-width="1"/><path d="M1.500 12V3.500Q1.500 1.500 3.500 1.500H6" fill="none" stroke="#fff" stroke-width="1"/><path d="M14.300 2.500V12.300H.8" fill="none" stroke="#000" stroke-width="1.500"/></svg>
<span class="t" style="left:225px;top:498px">zhengya</span>
<svg style="left:207px;top:517px" width="14" height="17" viewBox="0 0 14 17"><path d="M.5 .5H8.500L12.500 4.500V15.500H.5z" fill="#fff" stroke="#6e6e6e" stroke-width="1"/><path d="M8.500 .5V4.500H12.500" fill="none" stroke="#222" stroke-width="1"/><path d="M12.600 4.300V15.600H.4" fill="none" stroke="#000" stroke-width="1.400"/></svg>
<span class="t" style="left:225px;top:519px">171227.stp</span>
<svg style="left:207px;top:538px" width="14" height="17" viewBox="0 0 14 17"><path d="M0 0H9L13 4V16H0z" fill="url(#sp)"/></svg>
<div style="left:223px;top:536px;width:60px;height:21px;background:#3399ff;border:1px dotted #c8905a"></div><span class="t" style="left:225px;top:540px;color:#fff">chaba.stp</span>
<svg style="left:207px;top:559px" width="14" height="17" viewBox="0 0 14 17"><path d="M.5 .5H8.500L12.500 4.500V15.500H.5z" fill="#fff" stroke="#6e6e6e" stroke-width="1"/><path d="M8.500 .5V4.500H12.500" fill="none" stroke="#222" stroke-width="1"/><path d="M12.600 4.300V15.600H.4" fill="none" stroke="#000" stroke-width="1.400"/></svg>
<span class="t" style="left:225px;top:561px">modle_2.stp</span>
<svg style="left:207px;top:580px" width="14" height="17" viewBox="0 0 14 17"><path d="M.5 .5H8.500L12.500 4.500V15.500H.5z" fill="#fff" stroke="#6e6e6e" stroke-width="1"/><path d="M8.500 .5V4.500H12.500" fill="none" stroke="#222" stroke-width="1"/><path d="M12.600 4.300V15.600H.4" fill="none" stroke="#000" stroke-width="1.400"/></svg>
<span class="t" style="left:225px;top:582px">spring-16h.stp</span>
<svg style="left:350px;top:433px" width="14" height="17" viewBox="0 0 14 17"><path d="M.5 .5H8.500L12.500 4.500V15.500H.5z" fill="#fff" stroke="#6e6e6e" stroke-width="1"/><path d="M8.500 .5V4.500H12.500" fill="none" stroke="#222" stroke-width="1"/><path d="M12.600 4.300V15.600H.4" fill="none" stroke="#000" stroke-width="1.400"/></svg>
<span class="t" style="left:367px;top:435px">xiangai.stp</span>
<svg style="left:350px;top:454px" width="14" height="17" viewBox="0 0 14 17"><path d="M.5 .5H8.500L12.500 4.500V15.500H.5z" fill="#fff" stroke="#6e6e6e" stroke-width="1"/><path d="M8.500 .5V4.500H12.500" fill="none" stroke="#222" stroke-width="1"/><path d="M12.600 4.300V15.600H.4" fill="none" stroke="#000" stroke-width="1.400"/></svg>
<span class="t" style="left:367px;top:456px">zhengya.stp</span>
<span class="t" style="left:65px;top:632px"><u>F</u>ile Name:</span>
<div class="inp" style="left:132px;top:627px;width:330px;height:24px"></div><span class="t" style="left:137px;top:632px">"chaba.stp"</span>
<span class="t" style="left:65px;top:661px">File F<u>i</u>lter:</span>
<div class="inp" style="left:132px;top:655px;width:330px;height:25px"></div><span class="t" style="left:137px;top:661px">STEP (*.stp*,*.step*)</span>
<div style="left:448px;top:657px;width:11px;height:21px;background:linear-gradient(90deg,#fff,#d8d8d8);border:1px solid #888"></div>
<svg style="left:450px;top:665px" width="8" height="5" viewBox="0 0 8 5"><path d="M0 0H8L4 5z" fill="#000"/></svg>
<div class="btn" style="left:466px;top:627px;width:80px;height:23px"></div><span class="t" style="left:466px;top:632px;width:80px;text-align:center"><u>O</u>K</span>
<div class="btn" style="left:466px;top:656px;width:80px;height:23px"></div><span class="t" style="left:466px;top:661px;width:80px;text-align:center"><u>C</u>ancel</span>

<svg style="left:290px;top:400px" width="17" height="15" viewBox="0 0 17 15"><path d="M1 3.500 2.500 1.500H7L8.500 3.500H15.500V13.500H1z" fill="#f8f490" stroke="#222" stroke-width="1.200"/><path d="M8 6V11.500M5 8.500 8 5.500 11 8.500M8 11.500H11.500" fill="none" stroke="#000" stroke-width="1.300"/></svg>
<svg style="left:315px;top:399px" width="16" height="17" viewBox="0 0 16 17"><path d="M1 8.500 8 1.500 15 8.500" fill="none" stroke="#000" stroke-width="1.400"/><path d="M3 8V15.500H13V8L8 3z" fill="#fff" stroke="#000" stroke-width="1"/><rect x="6" y="10" width="4" height="5.500" fill="#f4e050" stroke="#000" stroke-width=".8"/><rect x="11" y="2" width="2" height="3.500" fill="#c82020"/></svg>
<svg style="left:339px;top:400px" width="16" height="15" viewBox="0 0 16 15"><path d="M1.500 13.500 9 5" stroke="#000" stroke-width="1.800"/><path d="M6 3 9.500 1 15 6.500 13 8.500 11 5.500 8 6z" fill="#c8a040" stroke="#000" stroke-width=".9"/></svg>
<svg style="left:362px;top:399px" width="18" height="17" viewBox="0 0 18 17"><path d="M1 14.500 13 1.500" stroke="#000" stroke-width="1.300"/><path d="M8.500 7 12.500 4.500 16.500 10 12 13z" fill="#c82838" stroke="#400" stroke-width=".6"/><path d="M10 11 13.500 8.500 15 10.500 12 13z" fill="#2838b8"/></svg>
<svg style="left:386px;top:398px" width="18" height="18" viewBox="0 0 18 18"><path d="M1 7 2.500 5H6.500L8 7H13.500V16.500H1z" fill="#f8f490" stroke="#222" stroke-width="1.200"/><path d="M13.500 0V8M9.500 4H17.500M10.700 1.200 16.300 6.800M16.300 1.200 10.700 6.800" stroke="#333" stroke-width=".8"/></svg>
<div style="left:407px;top:397px;width:25px;height:22px;border:1px solid #6a6a6a;border-radius:3px;background:#dcdcdc;box-shadow:inset 1px 1px 1px #b0b0b0"></div>
<svg style="left:411px;top:401px" width="17" height="14" viewBox="0 0 17 14"><g fill="none" stroke="#1828a8" stroke-width="1"><rect x=".5" y=".5" width="2.500" height="2.500"/><rect x="9.500" y=".5" width="2.500" height="2.500"/><rect x=".5" y="5.500" width="2.500" height="2.500"/><rect x="9.500" y="5.500" width="2.500" height="2.500"/><rect x=".5" y="10.500" width="2.500" height="2.500"/><rect x="9.500" y="10.500" width="2.500" height="2.500"/><path d="M4.500 2H7.500M13.500 2H16.500M4.500 7H7.500M13.500 7H16.500M4.500 12H7.500M13.500 12H16.500"/></g></svg>
<svg style="left:435px;top:401px" width="16" height="14" viewBox="0 0 16 14"><g fill="none" stroke="#1828a8" stroke-width="1.100"><rect x="1.500" y=".6" width="3" height="3.500"/><path d="M0 6.500H6"/><rect x="10.500" y="6.500" width="3" height="3.500"/><path d="M9 12.500H15"/></g></svg>
<svg style="left:459px;top:400px" width="17" height="16" viewBox="0 0 17 16"><path d="M0 1.500H17" stroke="#1828a8" stroke-width="1.200" stroke-dasharray="1 1"/><g stroke="#000" stroke-width="2" stroke-dasharray="2 1"><path d="M2 4V16M5.500 4V16M9 4V16M12.500 4V16M16 4V16" stroke-dasharray="1.500 1"/></g><path d="M0 4V16" stroke="#1828a8" stroke-width="1" stroke-dasharray="1 1"/></svg>
<svg style="left:483px;top:398px" width="14" height="18" viewBox="0 0 14 18"><rect x="1" y="3.500" width="12" height="13.500" rx="1.500" fill="#fdfdfd" stroke="#b8b8b8" stroke-width="1"/><circle cx="7" cy="3" r="2" fill="#c8c8e8" stroke="#a0a0c0" stroke-width=".8"/></svg>
</body></html>
